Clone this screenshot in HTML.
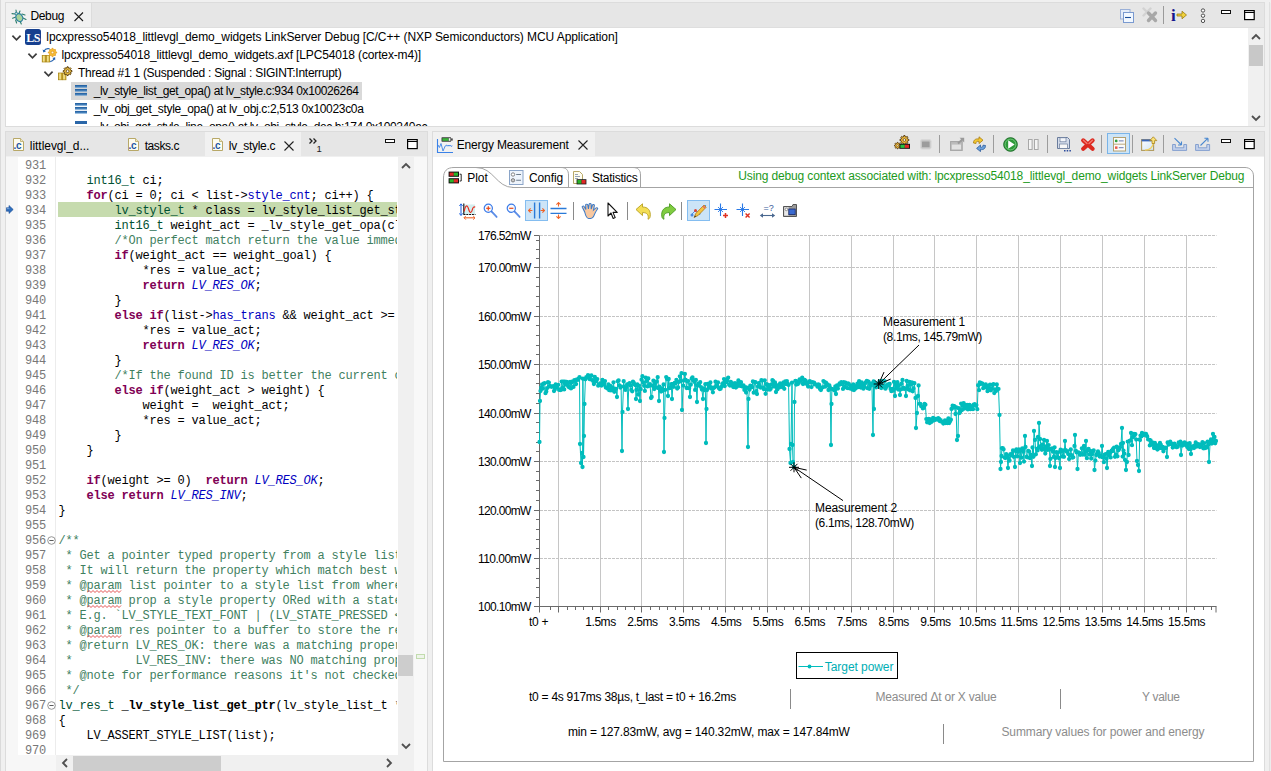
<!DOCTYPE html>
<html lang="en"><head><meta charset="utf-8"><title>Debug - Energy Measurement</title>
<style>
html,body{margin:0;padding:0}
body{width:1271px;height:771px;overflow:hidden;position:relative;background:#f0f0f0;font-family:"Liberation Sans",sans-serif;font-size:12px}
.b{position:absolute;display:block}
.t{position:absolute;white-space:pre;line-height:16px;height:16px}
.ui{font-family:"Liberation Sans",sans-serif;font-size:12px}
.ax{font-family:"Liberation Sans",sans-serif;font-size:12px}
.code{position:absolute;white-space:pre;font-family:"Liberation Mono",monospace;font-size:12px;letter-spacing:-0.2px;line-height:15px;height:15px;color:#000}
.kw{color:#7f0055;font-weight:bold}
.ty{color:#005032}
.fld{color:#0000c0}
.en{color:#0000c0;font-style:italic}
.cm{color:#3f7f5f}
.fn{font-weight:bold}
.ln{color:#787878}
.sq{text-decoration:underline wavy #e03030 1px;text-underline-offset:2px}

</style></head>
<body>
<div class="b" style="left:0px;top:0px;width:1px;height:771px;background:#dadada;"></div>
<div class="b" style="left:1269px;top:2px;width:1px;height:769px;background:#e0e0e0;"></div>
<div class="b" style="left:1270px;top:3px;width:1px;height:768px;background:#ececec;"></div>
<div class="b" style="left:5px;top:2px;width:1260px;height:125px;background:#ffffff;border:1px solid #dcdcdc;box-sizing:border-box;"></div>
<div class="b" style="left:6px;top:3px;width:1258px;height:25px;background:#e6e6e6;"></div>
<div class="b" style="left:6px;top:3px;width:85px;height:25px;background:#f1f1f1;"></div>
<div class="b" style="left:91px;top:3px;width:1px;height:25px;background:#dcdcdc;"></div>
<div class="b" style="left:6px;top:27px;width:1258px;height:1px;background:#dedede;"></div>
<span id="t1" class="t ui" style="left:30.5px;top:7.5px;color:#000;letter-spacing:-0.375px;">Debug</span>
<svg class="b" style="left:74px;top:12px" width="10" height="10" viewBox="0 0 10 10"><path d="M0.5 0.5L9 9M9 0.5L0.5 9" stroke="#1a1a1a" stroke-width="1.1" fill="none"/></svg>
<svg class="b" style="left:11px;top:34px" width="11" height="8" viewBox="0 0 11 8"><path d="M1.4 1.6L5.5 5.8L9.6 1.6" stroke="#3c3c3c" stroke-width="1.7" fill="none"/></svg>
<svg class="b" style="left:27.2px;top:52px" width="11" height="8" viewBox="0 0 11 8"><path d="M1.4 1.6L5.5 5.8L9.6 1.6" stroke="#3c3c3c" stroke-width="1.7" fill="none"/></svg>
<svg class="b" style="left:43.3px;top:70px" width="11" height="8" viewBox="0 0 11 8"><path d="M1.4 1.6L5.5 5.8L9.6 1.6" stroke="#3c3c3c" stroke-width="1.7" fill="none"/></svg>
<span id="t2" class="t ui" style="left:46.3px;top:28.5px;color:#000;letter-spacing:-0.079px;">lpcxpresso54018_littlevgl_demo_widgets LinkServer Debug [C/C++ (NXP Semiconductors) MCU Application]</span>
<span id="t3" class="t ui" style="left:61.4px;top:46.5px;color:#000;letter-spacing:-0.142px;">lpcxpresso54018_littlevgl_demo_widgets.axf [LPC54018 (cortex-m4)]</span>
<span id="t4" class="t ui" style="left:78.0px;top:64.5px;color:#000;letter-spacing:-0.263px;">Thread #1 1 (Suspended : Signal : SIGINT:Interrupt)</span>
<div class="b" style="left:71px;top:82px;width:291px;height:18px;background:#d9d9d9;"></div>
<span id="t5" class="t ui" style="left:93.7px;top:82.5px;color:#000;letter-spacing:-0.378px;">_lv_style_list_get_opa() at lv_style.c:934 0x10026264</span>
<span id="t6" class="t ui" style="left:93.7px;top:100.5px;color:#000;letter-spacing:-0.328px;">_lv_obj_get_style_opa() at lv_obj.c:2,513 0x10023c0a</span>
<div class="b" style="left:70px;top:118px;width:400px;height:8.4px;overflow:hidden">
<span id="t7" class="t ui" style="left:23.7px;top:1.3px;color:#000;letter-spacing:-0.415px;">_lv_obj_get_style_line_opa() at lv_obj_style_dec.h:174 0x100240ac</span>
<div class="b" style="left:5px;top:3px;width:12px;height:2.7px;background:#2a66a8;"></div>
</div>
<svg class="b" style="left:75px;top:85px" width="12" height="11" viewBox="0 0 12 11"><defs><linearGradient id="fg90" x1="0" y1="0" x2="0" y2="1"><stop offset="0" stop-color="#1c5a9c"/><stop offset="1" stop-color="#5c96cc"/></linearGradient></defs><rect x="0" y="0" width="12" height="2.7" fill="url(#fg90)"/><rect x="0" y="3.95" width="12" height="2.7" fill="url(#fg90)"/><rect x="0" y="7.9" width="12" height="2.7" fill="url(#fg90)"/></svg>
<svg class="b" style="left:75px;top:103px" width="12" height="11" viewBox="0 0 12 11"><defs><linearGradient id="fg108" x1="0" y1="0" x2="0" y2="1"><stop offset="0" stop-color="#1c5a9c"/><stop offset="1" stop-color="#5c96cc"/></linearGradient></defs><rect x="0" y="0" width="12" height="2.7" fill="url(#fg108)"/><rect x="0" y="3.95" width="12" height="2.7" fill="url(#fg108)"/><rect x="0" y="7.9" width="12" height="2.7" fill="url(#fg108)"/></svg>
<div class="b" style="left:1248px;top:28px;width:16px;height:98px;background:#f0f0f0;"></div>
<div class="b" style="left:1249px;top:45px;width:14px;height:21px;background:#c8c8c8;"></div>
<svg class="b" style="left:1251px;top:33px" width="10" height="8" viewBox="0 0 10 8"><path d="M1 6L5 2L9 6" stroke="#505050" stroke-width="1.8" fill="none"/></svg>
<svg class="b" style="left:1251px;top:113.8px" width="10" height="8" viewBox="0 0 10 8"><path d="M1 2L5 6L9 2" stroke="#505050" stroke-width="1.8" fill="none"/></svg>
<div class="b" style="left:5px;top:131px;width:423px;height:640px;background:#ffffff;border:1px solid #dcdcdc;border-bottom:none;box-sizing:border-box;"></div>
<div class="b" style="left:6px;top:132px;width:421px;height:24px;background:#e6e6e6;"></div>
<div class="b" style="left:6px;top:156px;width:421px;height:1px;background:#f0f0f0;"></div>
<div class="b" style="left:205px;top:132px;width:96px;height:25px;background:#f1f1f1;"></div>
<span id="t8" class="t ui" style="left:29.8px;top:137.5px;color:#000;letter-spacing:-0.038px;">littlevgl_d...</span>
<span id="t9" class="t ui" style="left:144.7px;top:137.5px;color:#000;letter-spacing:-0.435px;">tasks.c</span>
<span id="t10" class="t ui" style="left:228.8px;top:137.5px;color:#000;letter-spacing:-0.296px;">lv_style.c</span>
<svg class="b" style="left:284px;top:141px" width="10" height="10" viewBox="0 0 10 10"><path d="M0.5 0.5L9.5 9.5M9.5 0.5L0.5 9.5" stroke="#222" stroke-width="1.1" fill="none"/></svg>
<svg class="b" style="left:308px;top:137px" width="14" height="16" viewBox="0 0 14 16"><path d="M1.5 1.5L4 4L1.5 6.5M5.5 1.5L8 4L5.5 6.5" stroke="#222" stroke-width="1.3" fill="none"/><text x="8.5" y="14.5" font-size="9.5" font-family="Liberation Sans, sans-serif" fill="#222">1</text></svg>
<svg class="b" style="left:385px;top:139px" width="10" height="4" viewBox="0 0 10 4"><rect x="0.5" y="0.5" width="9" height="3" fill="#fff" stroke="#111" stroke-width="1"/></svg><svg class="b" style="left:407px;top:139px" width="11" height="11" viewBox="0 0 11 11"><rect x="0.6" y="0.6" width="9.6" height="9" fill="#fff" stroke="#000" stroke-width="1.2"/><path d="M0.5 2.5H10.2" stroke="#000" stroke-width="1"/></svg>
<svg class="b" style="left:1221px;top:10px" width="10" height="4" viewBox="0 0 10 4"><rect x="0.5" y="0.5" width="9" height="3" fill="#fff" stroke="#111" stroke-width="1"/></svg><svg class="b" style="left:1243.5px;top:10px" width="11" height="11" viewBox="0 0 11 11"><rect x="0.6" y="0.6" width="9.6" height="9" fill="#fff" stroke="#000" stroke-width="1.2"/><path d="M0.5 2.5H10.2" stroke="#000" stroke-width="1"/></svg>
<div class="b" style="left:6px;top:157px;width:12px;height:614px;background:#f7f7f7;"></div>
<div class="b" style="left:55px;top:157px;width:1px;height:598px;background:#ececec;"></div>
<div class="b" style="left:398px;top:157px;width:16px;height:598px;background:#f0f0f0;"></div>
<div class="b" style="left:398px;top:655px;width:15px;height:21px;background:#cdcdcd;"></div>
<svg class="b" style="left:400.5px;top:162px" width="10" height="8" viewBox="0 0 10 8"><path d="M1 6L5 2L9 6" stroke="#505050" stroke-width="1.8" fill="none"/></svg>
<svg class="b" style="left:400.5px;top:742px" width="10" height="8" viewBox="0 0 10 8"><path d="M1 2L5 6L9 2" stroke="#505050" stroke-width="1.8" fill="none"/></svg>
<div class="b" style="left:414px;top:157px;width:13px;height:614px;background:#f8f8f8;"></div>
<div class="b" style="left:416px;top:654px;width:9px;height:5px;border:1px solid #c2dcae;box-sizing:border-box;background:#eef4ea"></div>
<div class="b" style="left:56px;top:755px;width:358px;height:16px;background:#f0f0f0;"></div>
<div class="b" style="left:73px;top:756px;width:148px;height:15px;background:#cdcdcd;"></div>
<svg class="b" style="left:60.5px;top:758px" width="8" height="10" viewBox="0 0 8 10"><path d="M6 1L2 5L6 9" stroke="#505050" stroke-width="1.8" fill="none"/></svg>
<svg class="b" style="left:384.5px;top:758px" width="8" height="10" viewBox="0 0 8 10"><path d="M2 1L6 5L2 9" stroke="#505050" stroke-width="1.8" fill="none"/></svg>
<div class="b" style="left:18px;top:755px;width:38px;height:16px;background:#f7f7f7;"></div>
<div class="b" style="left:432px;top:131px;width:833px;height:640px;background:#ffffff;border:1px solid #dcdcdc;border-bottom:none;box-sizing:border-box;"></div>
<div class="b" style="left:433px;top:132px;width:831px;height:24px;background:#e6e6e6;"></div>
<div class="b" style="left:433px;top:156px;width:831px;height:1px;background:#f0f0f0;"></div>
<div class="b" style="left:433px;top:132px;width:162px;height:25px;background:#f1f1f1;"></div>
<span id="t11" class="t ui" style="left:456.7px;top:136.5px;color:#000;letter-spacing:-0.152px;">Energy Measurement</span>
<svg class="b" style="left:578px;top:140px" width="10" height="10" viewBox="0 0 10 10"><path d="M0.5 0.5L9.5 9.5M9.5 0.5L0.5 9.5" stroke="#222" stroke-width="1.1" fill="none"/></svg>
<svg class="b" style="left:1221px;top:139px" width="10" height="4" viewBox="0 0 10 4"><rect x="0.5" y="0.5" width="9" height="3" fill="#fff" stroke="#111" stroke-width="1"/></svg><svg class="b" style="left:1243.5px;top:139px" width="11" height="11" viewBox="0 0 11 11"><rect x="0.6" y="0.6" width="9.6" height="9" fill="#fff" stroke="#000" stroke-width="1.2"/><path d="M0.5 2.5H10.2" stroke="#000" stroke-width="1"/></svg>
<svg class="b" style="left:11px;top:9px" width="16" height="16" viewBox="0 0 16 16">
<g stroke="#2e7d6b" stroke-width="1.1" fill="none" stroke-linecap="round">
<path d="M5 1L5.4 4M9 2L8 4.2M1 4.6L4 5M1.6 9.3L4.2 8.2M4.6 11L5.6 14M9 12L10.3 15M11 5L14 6M12 9L15 10.5"/></g>
<ellipse cx="8.3" cy="8.6" rx="3.3" ry="4.1" transform="rotate(-30 8.3 8.6)" fill="#a9d39a" stroke="#2a7fa0" stroke-width="1.2"/>
<circle cx="5.3" cy="4.6" r="1.3" fill="#cfe6d0" stroke="#2a7fa0" stroke-width="1"/>
</svg>
<svg class="b" style="left:25px;top:29px" width="16" height="16" viewBox="0 0 16 16"><rect x="0" y="0" width="16" height="16" rx="2.5" fill="#17408f"/><text x="8" y="12.6" text-anchor="middle" font-family="Liberation Serif, serif" font-weight="bold" font-size="12" fill="#fff" letter-spacing="-0.5">LS</text></svg>
<svg class="b" style="left:41px;top:47px" width="17" height="17" viewBox="0 0 17 17"><defs><linearGradient id="gb" x1="0" y1="0" x2="1" y2="0"><stop offset="0" stop-color="#c09a18"/><stop offset="0.45" stop-color="#fbeea0"/><stop offset="1" stop-color="#c8a020"/></linearGradient></defs>
<rect x="1.2" y="8.4" width="3.5" height="6.6" fill="url(#gb)" stroke="#a88410" stroke-width="0.7"/>
<rect x="5.2" y="8.4" width="3.5" height="6.6" fill="url(#gb)" stroke="#a88410" stroke-width="0.7"/>
<polygon points="15.66,4.96 15.66,6.04 14.50,6.31 14.19,7.05 14.83,8.06 14.06,8.83 13.05,8.19 12.31,8.50 12.04,9.66 10.96,9.66 10.69,8.50 9.95,8.19 8.94,8.83 8.17,8.06 8.81,7.05 8.50,6.31 7.34,6.04 7.34,4.96 8.50,4.69 8.81,3.95 8.17,2.94 8.94,2.17 9.95,2.81 10.69,2.50 10.96,1.34 12.04,1.34 12.31,2.50 13.05,2.81 14.06,2.17 14.83,2.94 14.19,3.95 14.50,4.69" fill="#f8bc34" stroke="#e09a18" stroke-width="0.7" stroke-linejoin="round"/>
<circle cx="11.5" cy="5.5" r="1.3" fill="#fff4d8" stroke="#d08a10" stroke-width="0.6"/>
<path d="M2.8 4.2C4 2 6.2 1.2 8.6 1.8" stroke="#1f5fae" stroke-width="1.1" fill="none"/><path d="M1.6 2.6L2.4 5.6L5 4.2Z" fill="#1f5fae"/>
<path d="M9.2 14.6C11 14.4 12.4 13.4 13.2 11.8" stroke="#1f5fae" stroke-width="1.1" fill="none"/><path d="M11.4 11L14.2 10.2L14.2 13.2Z" fill="#1f5fae"/>
</svg>
<svg class="b" style="left:58px;top:65px" width="17" height="17" viewBox="0 0 17 17"><defs><linearGradient id="gb2" x1="0" y1="0" x2="1" y2="0"><stop offset="0" stop-color="#c09a18"/><stop offset="0.45" stop-color="#fbeea0"/><stop offset="1" stop-color="#c8a020"/></linearGradient></defs>
<rect x="0.4" y="8" width="3.6" height="6.8" fill="url(#gb2)" stroke="#a88410" stroke-width="0.7"/>
<rect x="4.4" y="8" width="3.6" height="6.8" fill="url(#gb2)" stroke="#a88410" stroke-width="0.7"/>
<polygon points="13.96,5.63 13.96,6.77 12.74,7.05 12.42,7.83 13.09,8.88 12.28,9.69 11.23,9.02 10.45,9.34 10.17,10.56 9.03,10.56 8.75,9.34 7.97,9.02 6.92,9.69 6.11,8.88 6.78,7.83 6.46,7.05 5.24,6.77 5.24,5.63 6.46,5.35 6.78,4.57 6.11,3.52 6.92,2.71 7.97,3.38 8.75,3.06 9.03,1.84 10.17,1.84 10.45,3.06 11.23,3.38 12.28,2.71 13.09,3.52 12.42,4.57 12.74,5.35" fill="#ecc040" stroke="#5a3e0c" stroke-width="1" stroke-linejoin="round"/>
<circle cx="9.6" cy="6.2" r="1.4" fill="#fffaf0" stroke="#5a3e0c" stroke-width="0.8"/>
</svg>
<svg class="b" style="left:1120px;top:9px" width="14" height="14" viewBox="0 0 14 14">
<rect x="0.5" y="0.5" width="9.5" height="9.5" fill="#e4ecf8" stroke="#9ab0d8"/>
<rect x="3.5" y="3.5" width="10" height="10" fill="#f2f8ff" stroke="#7a9ad0"/>
<path d="M5 8.5H11" stroke="#1c4f9c" stroke-width="1.1"/></svg>
<svg class="b" style="left:1142px;top:7px" width="16" height="16" viewBox="0 0 16 16">
<path d="M1.5 1.5L8.5 8.5M8.5 1.5L1.5 8.5" stroke="#d2d2d2" stroke-width="2.4" stroke-linecap="round"/>
<path d="M6.5 6L13.5 13.5M13.5 6L6.5 13.5" stroke="#a8a8a8" stroke-width="3.4" stroke-linecap="round"/></svg>
<div class="b" style="left:1163px;top:6px;width:1px;height:18px;background:#9a9a9a;"></div>
<svg class="b" style="left:1171px;top:8px" width="17" height="14" viewBox="0 0 17 14">
<text x="0" y="12.5" font-family="Liberation Serif, serif" font-weight="bold" font-size="17" fill="#14148c">i</text>
<path d="M6 6H11V3.2L15.5 7L11 10.8V8H6Z" fill="#f0d23c" stroke="#9a7a10" stroke-width="0.8"/></svg>
<svg class="b" style="left:1200px;top:7.7px" width="6" height="16" viewBox="0 0 6 16"><circle cx="3" cy="2.5" r="1.7" fill="#fff" stroke="#404040" stroke-width="0.9"/><circle cx="3" cy="7.7" r="1.7" fill="#fff" stroke="#404040" stroke-width="0.9"/><circle cx="3" cy="12.9" r="1.7" fill="#fff" stroke="#404040" stroke-width="0.9"/></svg>
<svg class="b" style="left:13px;top:138px" width="11" height="13" viewBox="0 0 11 13"><path d="M0.5 0.5H7.5L10.5 3.5V12.5H0.5Z" fill="#fdfcf0" stroke="#b8a868"/>
<path d="M7.5 0.5V3.5H10.5" fill="#efe7c0" stroke="#b8a868" stroke-width="0.8"/>
<text x="0.6" y="11" font-family="Liberation Sans, sans-serif" font-weight="bold" font-size="10" fill="#2456a4" letter-spacing="-0.4">.c</text></svg>
<svg class="b" style="left:128px;top:138px" width="11" height="13" viewBox="0 0 11 13"><path d="M0.5 0.5H7.5L10.5 3.5V12.5H0.5Z" fill="#fdfcf0" stroke="#b8a868"/>
<path d="M7.5 0.5V3.5H10.5" fill="#efe7c0" stroke="#b8a868" stroke-width="0.8"/>
<text x="0.6" y="11" font-family="Liberation Sans, sans-serif" font-weight="bold" font-size="10" fill="#2456a4" letter-spacing="-0.4">.c</text></svg>
<svg class="b" style="left:212px;top:138px" width="11" height="13" viewBox="0 0 11 13"><path d="M0.5 0.5H7.5L10.5 3.5V12.5H0.5Z" fill="#fdfcf0" stroke="#b8a868"/>
<path d="M7.5 0.5V3.5H10.5" fill="#efe7c0" stroke="#b8a868" stroke-width="0.8"/>
<text x="0.6" y="11" font-family="Liberation Sans, sans-serif" font-weight="bold" font-size="10" fill="#2456a4" letter-spacing="-0.4">.c</text></svg>
<svg class="b" style="left:436px;top:136px" width="18" height="18" viewBox="0 0 18 18">
<rect x="5.5" y="1.3" width="9.6" height="4.4" rx="0.6" fill="#3c3c3c"/><rect x="6.4" y="2.2" width="6.2" height="2.6" fill="#3cb83c"/><rect x="12.8" y="2.2" width="1.6" height="2.6" fill="#f4f4f4"/><rect x="15.1" y="2.4" width="1.6" height="2.2" fill="#3c3c3c"/>
<path d="M1.5 3V16.5H17" stroke="#3a82e8" stroke-width="1.1" fill="none"/>
<path d="M2 9L3.4 11.5L5 7.5L7 15L9.2 10L10.4 9L11.2 10.2L12.2 9L13 10.2L14 9L15 10.4L16.4 9.8" stroke="#3a82e8" stroke-width="0.9" fill="none"/></svg>
<svg class="b" style="left:894px;top:135px" width="17" height="17" viewBox="0 0 17 17"><polygon points="14.86,4.42 14.86,5.58 13.62,5.86 13.29,6.66 13.97,7.74 13.14,8.57 12.06,7.89 11.26,8.22 10.98,9.46 9.82,9.46 9.54,8.22 8.74,7.89 7.66,8.57 6.83,7.74 7.51,6.66 7.18,5.86 5.94,5.58 5.94,4.42 7.18,4.14 7.51,3.34 6.83,2.26 7.66,1.43 8.74,2.11 9.54,1.78 9.82,0.54 10.98,0.54 11.26,1.78 12.06,2.11 13.14,1.43 13.97,2.26 13.29,3.34 13.62,4.14" fill="#f2bc3c" stroke="#4a3008" stroke-width="0.9" stroke-linejoin="round"/><circle cx="10.4" cy="5" r="1.4" fill="#fff6dc" stroke="#4a3008" stroke-width="0.7"/><polygon points="6.77,10.19 6.77,11.01 5.89,11.21 5.65,11.78 6.14,12.55 5.55,13.14 4.78,12.65 4.21,12.89 4.01,13.77 3.19,13.77 2.99,12.89 2.42,12.65 1.65,13.14 1.06,12.55 1.55,11.78 1.31,11.21 0.43,11.01 0.43,10.19 1.31,9.99 1.55,9.42 1.06,8.65 1.65,8.06 2.42,8.55 2.99,8.31 3.19,7.43 4.01,7.43 4.21,8.31 4.78,8.55 5.55,8.06 6.14,8.65 5.65,9.42 5.89,9.99" fill="#f2bc3c" stroke="#4a3008" stroke-width="0.8" stroke-linejoin="round"/><circle cx="3.6" cy="10.6" r="0.9" fill="#fff6dc" stroke="#4a3008" stroke-width="0.5"/><rect x="5.5" y="8.8" width="10.5" height="5" fill="#111"/><rect x="6.4" y="9.7" width="4.4" height="3.2" fill="#28c040"/><rect x="10.8" y="9.7" width="4.3" height="3.2" fill="#e02828"/></svg>
<svg class="b" style="left:920px;top:139px" width="12" height="11" viewBox="0 0 12 11"><rect x="0.5" y="0.5" width="10.6" height="9.6" rx="1.8" fill="#c8c8c8" stroke="#d8d8d8" stroke-width="1"/><rect x="2" y="2.4" width="7.6" height="5.8" rx="0.5" fill="#9c9c9c"/></svg>
<div class="b" style="left:939px;top:135px;width:1px;height:18px;background:#9c9c9c;"></div>
<svg class="b" style="left:950px;top:137px" width="15" height="14" viewBox="0 0 15 14"><rect x="0.6" y="4.6" width="11.6" height="8.8" fill="#bcbcbc" stroke="#a6a6a6" stroke-width="1.1"/><rect x="1.8" y="7.6" width="9.2" height="4.8" fill="#e2e2e2"/><path d="M8 6.5L12.5 2.2" stroke="#9a9a9a" stroke-width="2" fill="none"/><path d="M9.6 0.8H14.2V5.4Z" fill="#9a9a9a"/></svg>
<svg class="b" style="left:972px;top:136px" width="15" height="16" viewBox="0 0 15 16">
<path d="M1.5 7C1.5 3.5 4 2.5 7 3V0.8L11 4.2L7 7.6V5.4C5 5 4 5.6 4 7.5Z" fill="#f4c830" stroke="#a87c10" stroke-width="0.8"/>
<path d="M13.5 9.5C13.5 13 11 14 8.5 13.5V15.6L4.6 12.4L8.5 9V11.2C10.2 11.5 11 10.8 11 9.2Z" fill="#6aa0dc" stroke="#2a5a9c" stroke-width="0.8"/></svg>
<div class="b" style="left:993px;top:135px;width:1px;height:18px;background:#9c9c9c;"></div>
<svg class="b" style="left:1003px;top:137px" width="15" height="15" viewBox="0 0 15 15"><circle cx="7.5" cy="7.5" r="6.8" fill="#2e9a3a" stroke="#1d6e28" stroke-width="1"/><circle cx="7.5" cy="7.5" r="5.4" fill="none" stroke="#7fd088" stroke-width="0.8"/><path d="M5.2 3.2L11.6 7.5L5.2 11.8Z" fill="#fff"/></svg>
<svg class="b" style="left:1028px;top:139px" width="11" height="11" viewBox="0 0 11 11"><rect x="0.5" y="0.5" width="3.6" height="10" fill="#f4f4f4" stroke="#a8a8a8"/><rect x="6.5" y="0.5" width="3.6" height="10" fill="#f4f4f4" stroke="#a8a8a8"/></svg>
<div class="b" style="left:1047px;top:135px;width:1px;height:18px;background:#9c9c9c;"></div>
<svg class="b" style="left:1057px;top:137px" width="15" height="15" viewBox="0 0 15 15"><path d="M0.5 0.5H10.5L12.5 2.5V11.5H0.5Z" fill="#d4dcea" stroke="#6a7c9c"/>
<rect x="3" y="0.8" width="6" height="4" fill="#f4f6fa" stroke="#6a7c9c" stroke-width="0.7"/><rect x="2.5" y="7" width="8" height="4.4" fill="#f8f8f8" stroke="#6a7c9c" stroke-width="0.7"/>
<rect x="7" y="13" width="1.5" height="1.5" fill="#2a4a9c"/><rect x="9.7" y="13" width="1.5" height="1.5" fill="#2a4a9c"/><rect x="12.4" y="13" width="1.5" height="1.5" fill="#2a4a9c"/></svg>
<svg class="b" style="left:1080px;top:137px" width="16" height="15" viewBox="0 0 16 15"><path d="M3.2 3.4L12.6 11.8M12.6 3.4L3.2 11.8" stroke="#dc2a20" stroke-width="4.2" stroke-linecap="round"/><path d="M3.4 3.2L7 6.4M12.4 3.2L9 6.4" stroke="#f47a70" stroke-width="1.4" stroke-linecap="round"/></svg>
<div class="b" style="left:1101px;top:135px;width:1px;height:18px;background:#9c9c9c;"></div>
<div class="b" style="left:1107px;top:133px;width:23px;height:21px;background:#cce4f7;border:1px solid #7ab4e8;box-sizing:border-box;"></div>
<svg class="b" style="left:1113px;top:137px" width="13" height="15" viewBox="0 0 13 15"><rect x="0.5" y="0.5" width="12" height="13.5" fill="#fafafa" stroke="#b4a070"/><path d="M0.5 7.2H12.5" stroke="#b4a070" stroke-width="0.9"/>
<circle cx="3.2" cy="3.9" r="1.4" fill="#30a040"/><rect x="2" y="9.4" width="2.5" height="2.5" fill="#e85a4a"/>
<path d="M5.8 3.9H10.6M5.8 10.7H10.6" stroke="#6a7ab0" stroke-width="1"/></svg>
<div class="b" style="left:1132px;top:135px;width:1px;height:18px;background:#9c9c9c;"></div>
<svg class="b" style="left:1141px;top:136px" width="17" height="16" viewBox="0 0 17 16"><defs><linearGradient id="wg" x1="0" y1="0" x2="1" y2="1"><stop offset="0" stop-color="#ffffff"/><stop offset="1" stop-color="#cfe4f6"/></linearGradient></defs>
<rect x="0.6" y="3.6" width="12" height="10.8" fill="url(#wg)" stroke="#b09a5c" stroke-width="1.1"/><rect x="0.6" y="3.4" width="10" height="2" fill="#3a66b8"/>
<path d="M4 14.2C9 14.2 12.2 11 12.2 6" stroke="#f0d060" stroke-width="1.2" fill="none"/>
<path d="M12.3 0.8L15.8 4.6H13.6V7.5H11V4.6H8.8Z" fill="#fbe27a" stroke="#a8841c" stroke-width="0.8"/></svg>
<div class="b" style="left:1163px;top:135px;width:1px;height:18px;background:#9c9c9c;"></div>
<svg class="b" style="left:1172px;top:137px" width="16" height="15" viewBox="0 0 16 15"><path d="M0.6 7.5V13.4H14.6V7.5H11.8V10.8H3.4V7.5Z" fill="#c4d2ec" stroke="#7a98cc" stroke-width="0.9"/><path d="M2.5 1.2L9.5 8M9.5 8V4.6M9.5 8H6" stroke="#4a88d0" stroke-width="1.1" fill="none"/></svg>
<svg class="b" style="left:1195px;top:137px" width="17" height="15" viewBox="0 0 17 15"><path d="M0.6 7.5V13.4H14.6V7.5H11.8V10.8H3.4V7.5Z" fill="#c4d2ec" stroke="#7a98cc" stroke-width="0.9"/><path d="M5.5 8.5L13 1.2M13 1.2V4.8M13 1.2H9.4" stroke="#4a88d0" stroke-width="1.1" fill="none"/></svg>
<svg class="b" style="left:6px;top:205px" width="8" height="9" viewBox="0 0 8 9"><path d="M0.3 2.8H3V0.5L7.2 4.5L3 8.5V6.2H0.3Z" fill="#2e6ebc" stroke="#1a4a94" stroke-width="0.6"/><path d="M0.8 3.6H3.4" stroke="#8ab4e4" stroke-width="0.8"/></svg>
<svg class="b" style="left:46.5px;top:535.5px" width="9" height="9" viewBox="0 0 9 9"><circle cx="4.5" cy="4.5" r="3.8" fill="#fff" stroke="#8a8a8a" stroke-width="0.9"/><path d="M2.4 4.5H6.6" stroke="#5a5a5a" stroke-width="1"/></svg>
<svg class="b" style="left:46.5px;top:700.5px" width="9" height="9" viewBox="0 0 9 9"><circle cx="4.5" cy="4.5" r="3.8" fill="#fff" stroke="#8a8a8a" stroke-width="0.9"/><path d="M2.4 4.5H6.6" stroke="#5a5a5a" stroke-width="1"/></svg>
<div class="b" style="left:18px;top:157px;width:379px;height:598px;overflow:hidden">
<div class="b" style="left:40px;top:45px;width:339px;height:15px;background:#c6dbae;"></div>
<span class="code ln" style="left:7px;top:2px">931</span>
<span class="code ln" style="left:7px;top:17px">932</span>
<span class="code" style="left:40.5px;top:17px">    <span class="ty">int16_t</span> ci;</span>
<span class="code ln" style="left:7px;top:32px">933</span>
<span class="code" style="left:40.5px;top:32px">    <span class="kw">for</span>(ci = 0; ci &lt; list-&gt;<span class="fld">style_cnt</span>; ci++) {</span>
<span class="code ln" style="left:7px;top:47px">934</span>
<span class="code" style="left:40.5px;top:47px">        <span class="ty">lv_style_t</span> * class = lv_style_list_get_style(list, ci);</span>
<span class="code ln" style="left:7px;top:62px">935</span>
<span class="code" style="left:40.5px;top:62px">        <span class="ty">int16_t</span> weight_act = _lv_style_get_opa(class, prop, &amp;value_act);</span>
<span class="code ln" style="left:7px;top:77px">936</span>
<span class="code" style="left:40.5px;top:77px">        <span class="cm">/*On perfect match return the value immediately*/</span></span>
<span class="code ln" style="left:7px;top:92px">937</span>
<span class="code" style="left:40.5px;top:92px">        <span class="kw">if</span>(weight_act == weight_goal) {</span>
<span class="code ln" style="left:7px;top:107px">938</span>
<span class="code" style="left:40.5px;top:107px">            *res = value_act;</span>
<span class="code ln" style="left:7px;top:122px">939</span>
<span class="code" style="left:40.5px;top:122px">            <span class="kw">return</span> <span class="en">LV_RES_OK</span>;</span>
<span class="code ln" style="left:7px;top:137px">940</span>
<span class="code" style="left:40.5px;top:137px">        }</span>
<span class="code ln" style="left:7px;top:152px">941</span>
<span class="code" style="left:40.5px;top:152px">        <span class="kw">else</span> <span class="kw">if</span>(list-&gt;<span class="fld">has_trans</span> &amp;&amp; weight_act &gt;= 0 &amp;&amp; weight_act &gt; weight) {</span>
<span class="code ln" style="left:7px;top:167px">942</span>
<span class="code" style="left:40.5px;top:167px">            *res = value_act;</span>
<span class="code ln" style="left:7px;top:182px">943</span>
<span class="code" style="left:40.5px;top:182px">            <span class="kw">return</span> <span class="en">LV_RES_OK</span>;</span>
<span class="code ln" style="left:7px;top:197px">944</span>
<span class="code" style="left:40.5px;top:197px">        }</span>
<span class="code ln" style="left:7px;top:212px">945</span>
<span class="code" style="left:40.5px;top:212px">        <span class="cm">/*If the found ID is better the current candidate then use it*/</span></span>
<span class="code ln" style="left:7px;top:227px">946</span>
<span class="code" style="left:40.5px;top:227px">        <span class="kw">else</span> <span class="kw">if</span>(weight_act &gt; weight) {</span>
<span class="code ln" style="left:7px;top:242px">947</span>
<span class="code" style="left:40.5px;top:242px">            weight =  weight_act;</span>
<span class="code ln" style="left:7px;top:257px">948</span>
<span class="code" style="left:40.5px;top:257px">            *res = value_act;</span>
<span class="code ln" style="left:7px;top:272px">949</span>
<span class="code" style="left:40.5px;top:272px">        }</span>
<span class="code ln" style="left:7px;top:287px">950</span>
<span class="code" style="left:40.5px;top:287px">    }</span>
<span class="code ln" style="left:7px;top:302px">951</span>
<span class="code ln" style="left:7px;top:317px">952</span>
<span class="code" style="left:40.5px;top:317px">    <span class="kw">if</span>(weight &gt;= 0)  <span class="kw">return</span> <span class="en">LV_RES_OK</span>;</span>
<span class="code ln" style="left:7px;top:332px">953</span>
<span class="code" style="left:40.5px;top:332px">    <span class="kw">else</span> <span class="kw">return</span> <span class="en">LV_RES_INV</span>;</span>
<span class="code ln" style="left:7px;top:347px">954</span>
<span class="code" style="left:40.5px;top:347px">}</span>
<span class="code ln" style="left:7px;top:362px">955</span>
<span class="code ln" style="left:7px;top:377px">956</span>
<span class="code" style="left:40.5px;top:377px"><span class="cm">/**</span></span>
<span class="code ln" style="left:7px;top:392px">957</span>
<span class="code" style="left:40.5px;top:392px"><span class="cm"> * Get a pointer typed property from a style list.</span></span>
<span class="code ln" style="left:7px;top:407px">958</span>
<span class="code" style="left:40.5px;top:407px"><span class="cm"> * It will return the property which match best with given state.</span></span>
<span class="code ln" style="left:7px;top:422px">959</span>
<span class="code" style="left:40.5px;top:422px"><span class="cm"> * @param list pointer to a style list from where the property should be get</span></span>
<span class="code ln" style="left:7px;top:437px">960</span>
<span class="code" style="left:40.5px;top:437px"><span class="cm"> * @param prop a style property ORed with a state.</span></span>
<span class="code ln" style="left:7px;top:452px">961</span>
<span class="code" style="left:40.5px;top:452px"><span class="cm"> * E.g. `LV_STYLE_TEXT_FONT | (LV_STATE_PRESSED &lt;&lt; LV_STYLE_STATE_POS)`</span></span>
<span class="code ln" style="left:7px;top:467px">962</span>
<span class="code" style="left:40.5px;top:467px"><span class="cm"> * @param res pointer to a buffer to store the result</span></span>
<span class="code ln" style="left:7px;top:482px">963</span>
<span class="code" style="left:40.5px;top:482px"><span class="cm"> * @return LV_RES_OK: there was a matching property in the list</span></span>
<span class="code ln" style="left:7px;top:497px">964</span>
<span class="code" style="left:40.5px;top:497px"><span class="cm"> *         LV_RES_INV: there was NO matching property in the list</span></span>
<span class="code ln" style="left:7px;top:512px">965</span>
<span class="code" style="left:40.5px;top:512px"><span class="cm"> * @note for performance reasons it&#x27;s not checked if the property really has pointer type</span></span>
<span class="code ln" style="left:7px;top:527px">966</span>
<span class="code" style="left:40.5px;top:527px"><span class="cm"> */</span></span>
<span class="code ln" style="left:7px;top:542px">967</span>
<span class="code" style="left:40.5px;top:542px"><span class="ty">lv_res_t</span> <span class="fn">_lv_style_list_get_ptr</span>(lv_style_list_t * list, lv_style_property_t prop, void ** res)</span>
<span class="code ln" style="left:7px;top:557px">968</span>
<span class="code" style="left:40.5px;top:557px">{</span>
<span class="code ln" style="left:7px;top:572px">969</span>
<span class="code" style="left:40.5px;top:572px">    LV_ASSERT_STYLE_LIST(list);</span>
<span class="code ln" style="left:7px;top:587px">970</span>
<svg class="b" style="left:68.5px;top:433px" width="35" height="3" viewBox="0 0 35 3"><path d="M0 2.5L2 0.5L4 2.5L6 0.5L8 2.5L10 0.5L12 2.5L14 0.5L16 2.5L18 0.5L20 2.5L22 0.5L24 2.5L26 0.5L28 2.5L30 0.5L32 2.5L34 0.5" stroke="#e04040" stroke-width="0.9" fill="none"/></svg>
<svg class="b" style="left:68.5px;top:448px" width="35" height="3" viewBox="0 0 35 3"><path d="M0 2.5L2 0.5L4 2.5L6 0.5L8 2.5L10 0.5L12 2.5L14 0.5L16 2.5L18 0.5L20 2.5L22 0.5L24 2.5L26 0.5L28 2.5L30 0.5L32 2.5L34 0.5" stroke="#e04040" stroke-width="0.9" fill="none"/></svg>
<svg class="b" style="left:68.5px;top:478px" width="35" height="3" viewBox="0 0 35 3"><path d="M0 2.5L2 0.5L4 2.5L6 0.5L8 2.5L10 0.5L12 2.5L14 0.5L16 2.5L18 0.5L20 2.5L22 0.5L24 2.5L26 0.5L28 2.5L30 0.5L32 2.5L34 0.5" stroke="#e04040" stroke-width="0.9" fill="none"/></svg>
</div>
<svg class="b" style="left:442px;top:166px" width="813" height="597" viewBox="0 0 813 597">
<path d="M1.5 595.5V12C1.5 5 5 1.5 12 1.5H803C808 1.5 811.5 5 811.5 10V595.5Z" fill="#ffffff" stroke="#a4a4a4" stroke-width="1"/>
<path d="M70 21.5H811.5" stroke="#a4a4a4" stroke-width="1" fill="none"/>
<path d="M34 1.5C52 1.5 54 21.5 71.5 21.5" fill="none" stroke="#a4a4a4" stroke-width="1"/>
<path d="M119 1.5C124 1.5 126.5 4 126.5 9V21.5" fill="none" stroke="#a4a4a4" stroke-width="1"/>
<path d="M191 1.5C196 1.5 198.5 4 198.5 9V21.5" fill="none" stroke="#a4a4a4" stroke-width="1"/>
</svg>
<svg class="b" style="left:448px;top:171px" width="15" height="14" viewBox="0 0 15 14"><rect x="0.6" y="0.6" width="10.4" height="5.2" fill="#111"/><rect x="1.6" y="1.6" width="4.2" height="3.2" fill="#e02828"/><rect x="5.8" y="1.6" width="4.2" height="3.2" fill="#28b428"/><rect x="0.6" y="7.2" width="10.4" height="5.2" fill="#111"/><rect x="1.6" y="8.2" width="4.2" height="3.2" fill="#28b428"/><rect x="5.8" y="8.2" width="4.2" height="3.2" fill="#e02828"/><path d="M11.6 3.2H13.2V10H11.6" stroke="#111" stroke-width="0.9" fill="none"/></svg>
<span id="t12" class="t ui" style="left:467.3px;top:170.0px;color:#000;letter-spacing:-0.047px;">Plot</span>
<svg class="b" style="left:509px;top:170px" width="15" height="15" viewBox="0 0 15 15"><rect x="0.5" y="0.5" width="13.5" height="14" fill="#eef4fc" stroke="#8aa4c8"/><circle cx="4" cy="4.5" r="1.7" fill="#fff" stroke="#6a6a6a" stroke-width="0.8"/><circle cx="4" cy="10.3" r="1.7" fill="#c8c8c8" stroke="#6a6a6a" stroke-width="0.8"/><path d="M7.2 4.5H12M7.2 10.3H12" stroke="#6a7a8a" stroke-width="1.1"/></svg>
<span id="t13" class="t ui" style="left:529.0px;top:170.0px;color:#000;letter-spacing:-0.115px;">Config</span>
<svg class="b" style="left:573px;top:171px" width="14" height="14" viewBox="0 0 14 14"><path d="M0.5 0.5H6.5L9.5 3.5V12.5H0.5Z" fill="#fffdf0" stroke="#b8a868"/><path d="M2 3.5H5M2 5.5H7M2 7.5H5" stroke="#7a8aa8" stroke-width="0.8"/><rect x="3.6" y="8.2" width="9.8" height="5.2" fill="#1a1a1a"/><rect x="4.4" y="9" width="4.2" height="3.6" fill="#28b428"/><rect x="8.6" y="9" width="4" height="3.6" fill="#e02828"/></svg>
<span id="t14" class="t ui" style="left:592.0px;top:170.0px;color:#000;letter-spacing:-0.252px;">Statistics</span>
<span id="t15" class="t ui" style="left:738.3px;top:168.0px;color:#1c9a1c;letter-spacing:-0.141px;">Using debug context associated with: lpcxpresso54018_littlevgl_demo_widgets LinkServer Debug</span>
<div class="b" style="left:525px;top:200px;width:23px;height:21px;background:#cce4f7;border:1px solid #84bdf0;box-sizing:border-box;"></div>
<div class="b" style="left:687px;top:200px;width:23px;height:21px;background:#cce4f7;border:1px solid #84bdf0;box-sizing:border-box;"></div>
<div class="b" style="left:573px;top:202px;width:1px;height:18px;background:#8a8a8a;"></div>
<div class="b" style="left:627px;top:202px;width:1px;height:18px;background:#8a8a8a;"></div>
<div class="b" style="left:681px;top:202px;width:1px;height:18px;background:#8a8a8a;"></div>
<svg class="b" style="left:459px;top:203px" width="17" height="17" viewBox="0 0 17 17"><rect x="5" y="1.5" width="11" height="9.5" fill="#d4f0f0"/>
<path d="M2 1V12" stroke="#2a6ae0" stroke-width="1.1"/><path d="M0.4 3L2 0.8L3.6 3M0.4 10.4L2 12.6L3.6 10.4" stroke="#2a6ae0" stroke-width="1" fill="none"/>
<path d="M4.8 0.5V11.5" stroke="#111" stroke-width="1.1" fill="none"/><path d="M4.5 11.5H16.5" stroke="#111" stroke-width="1.2" stroke-dasharray="2 0.8" fill="none"/>
<path d="M5.2 8.5C6.5 1.5 8.2 1.5 9.6 6C10.8 10.5 12.4 10.5 13.4 6.5C14 4.2 15 3.4 16.2 4.2" stroke="#e82818" stroke-width="1.1" fill="none"/>
<path d="M5 14.8H16" stroke="#f06428" stroke-width="1.1"/><path d="M6.8 13L5 14.8L6.8 16.6M14.2 13L16 14.8L14.2 16.6" stroke="#f06428" stroke-width="1" fill="none"/></svg>
<svg class="b" style="left:483px;top:203px" width="16" height="16" viewBox="0 0 16 16"><circle cx="5.3" cy="5.3" r="4.1" fill="#f6faff" stroke="#3a7ae8" stroke-width="1.2"/><path d="M8.4 8.4L13.6 13.8" stroke="#4a80e4" stroke-width="1.8" stroke-linecap="round"/><path d="M9 9.6L13 13.8" stroke="#a8c4f4" stroke-width="0.6"/><path d="M3.2 5.3H7.4" stroke="#e84818" stroke-width="1.2"/><path d="M5.3 3.2V7.4" stroke="#e84818" stroke-width="1.2"/></svg>
<svg class="b" style="left:506px;top:203px" width="16" height="16" viewBox="0 0 16 16"><circle cx="5.3" cy="5.3" r="4.1" fill="#f6faff" stroke="#3a7ae8" stroke-width="1.2"/><path d="M8.4 8.4L13.6 13.8" stroke="#4a80e4" stroke-width="1.8" stroke-linecap="round"/><path d="M9 9.6L13 13.8" stroke="#a8c4f4" stroke-width="0.6"/><path d="M3.2 5.3H7.4" stroke="#e84818" stroke-width="1.2"/></svg>
<svg class="b" style="left:528px;top:202px" width="17" height="17" viewBox="0 0 17 17"><path d="M6.6 0.5V16.5M11.6 0.5V16.5" stroke="#2a7ad8" stroke-width="1.4"/><path d="M0.5 8.5H4.4M12.6 8.5H16.5" stroke="#f06428" stroke-width="1.1"/><path d="M2.6 6.4L0.6 8.5L2.6 10.6M14.4 6.4L16.4 8.5L14.4 10.6" stroke="#f06428" stroke-width="1.1" fill="none"/></svg>
<svg class="b" style="left:550px;top:202px" width="17" height="17" viewBox="0 0 17 17"><path d="M0.5 6.5H16.5M0.5 11.4H16.5" stroke="#2a7ad8" stroke-width="1.4"/><path d="M8.5 0.5V4.4M8.5 12.6V16.5" stroke="#f06428" stroke-width="1.1"/><path d="M6.4 2.6L8.5 0.6L10.6 2.6M6.4 14.4L8.5 16.4L10.6 14.4" stroke="#f06428" stroke-width="1.1" fill="none"/></svg>
<svg class="b" style="left:581px;top:203px" width="18" height="16" viewBox="0 0 18 16"><path transform="scale(1.06 0.9)" d="M3.5 10C2.5 7.5 1.8 6 1.2 4.6C0.8 3.4 2.4 2.8 3 4L4.6 7.2L4.4 2.2C4.4 0.9 6.2 0.9 6.4 2.2L7 6.6L7.6 1.4C7.8 0.2 9.6 0.3 9.6 1.6L9.6 6.8L10.8 2.4C11.2 1.2 12.8 1.6 12.6 2.9L11.8 8L14 5.6C14.9 4.7 16.2 5.6 15.5 6.8C14.2 9 13.4 10.5 12.6 13C12 15.2 11.5 17 9 17.2H7.2C5.2 17 4.4 14.5 3.5 10Z" fill="#f8c8a0" stroke="#3a7ac8" stroke-width="1"/></svg>
<svg class="b" style="left:607px;top:202px" width="12" height="18" viewBox="0 0 12 18"><path d="M1 1V14L4 11L6.2 16.5L8.2 15.6L6 10.4H10.2Z" fill="#fff" stroke="#111" stroke-width="1.1" stroke-linejoin="round"/></svg>
<svg class="b" style="left:635px;top:203px" width="17" height="17" viewBox="0 0 17 17"><path d="M1 6.5L7.5 0.8V4C12.5 4 16 7 15.2 13.5C15 15 14 16 13 16.2C14 12 12 9.4 7.5 9.6V12.6Z" fill="#f4de54" stroke="#b8a020" stroke-width="0.9" stroke-linejoin="round"/></svg>
<svg class="b" style="left:659.5px;top:203px" width="17" height="17" viewBox="0 0 17 17"><path d="M16 6.5L9.5 0.8V4C4.5 4 1 7 1.8 13.5C2 15 3 16 4 16.2C3 12 5 9.4 9.5 9.6V12.6Z" fill="#80cc40" stroke="#4a9a20" stroke-width="0.9" stroke-linejoin="round"/></svg>
<svg class="b" style="left:690px;top:202px" width="18" height="18" viewBox="0 0 18 18"><path d="M1 13L5.5 8.5L9 11L16 3" stroke="#4a8ae0" stroke-width="1" fill="none"/>
<circle cx="2" cy="13" r="1.5" fill="#4a8ae0"/><circle cx="5.5" cy="8.5" r="1.5" fill="#e04030"/><circle cx="9" cy="11.5" r="1.5" fill="#4a8ae0"/>
<path d="M4 15.5L6 11.2L14 3L16.2 5.2L8.2 13.4Z" fill="#f4c440" stroke="#b07c18" stroke-width="0.8"/><path d="M13 4L15.2 6.2" stroke="#e06a6a" stroke-width="1.6"/><path d="M4 15.5L5 13.4L6.2 14.6Z" fill="#333"/></svg>
<svg class="b" style="left:713.5px;top:203px" width="16" height="16" viewBox="0 0 16 16"><path d="M6.5 0.5V13M0.5 6.5H13" stroke="#2a7ae8" stroke-width="1.1"/><path d="M4 4L9 9M9 4L4 9" stroke="#2a7ae8" stroke-width="0.9"/><path d="M11.5 10V15M9 12.5H14" stroke="#e03020" stroke-width="1.5"/></svg>
<svg class="b" style="left:735.7px;top:203px" width="16" height="16" viewBox="0 0 16 16"><path d="M6.5 0.5V13M0.5 6.5H13" stroke="#2a7ae8" stroke-width="1.1"/><path d="M4 4L9 9M9 4L4 9" stroke="#2a7ae8" stroke-width="0.9"/><path d="M9.6 10.6L13.6 14.6M13.6 10.6L9.6 14.6" stroke="#e03020" stroke-width="1.4"/></svg>
<svg class="b" style="left:758.5px;top:203px" width="17" height="16" viewBox="0 0 17 16"><text x="4.5" y="7.5" font-family="Liberation Sans, sans-serif" font-size="9" fill="#3a5a9a">=?</text><path d="M2 12.5H15" stroke="#4a6890" stroke-width="1.1"/><path d="M4 10.2L0.8 12.5L4 14.8ZM13 10.2L16.2 12.5L13 14.8Z" fill="#4a6890"/></svg>
<svg class="b" style="left:782px;top:203px" width="16" height="15" viewBox="0 0 16 15"><path d="M1.5 3.5H10L11 1.5H14.5V13.5H1.5Z" fill="#9a9a9a" stroke="#555" stroke-width="1"/><rect x="2.2" y="4.2" width="4.4" height="8.4" fill="#e8e8e8"/><circle cx="4.4" cy="6.4" r="1.3" fill="#fff" stroke="#6a6a6a" stroke-width="0.7"/><rect x="6.8" y="6" width="6.4" height="5.6" fill="#3a6ad0" stroke="#1a2a6a" stroke-width="0.8"/></svg>
<svg class="b" style="left:0px;top:0px" width="1271" height="771" viewBox="0 0 1271 771"><path d="M558.5 235.5V606.5" stroke="#c6c6c6" stroke-width="1"/><path d="M600.5 235.5V606.5" stroke="#c6c6c6" stroke-width="1"/><path d="M641.5 235.5V606.5" stroke="#c6c6c6" stroke-width="1"/><path d="M683.5 235.5V606.5" stroke="#c6c6c6" stroke-width="1"/><path d="M725.5 235.5V606.5" stroke="#c6c6c6" stroke-width="1"/><path d="M767.5 235.5V606.5" stroke="#c6c6c6" stroke-width="1"/><path d="M809.5 235.5V606.5" stroke="#c6c6c6" stroke-width="1"/><path d="M851.5 235.5V606.5" stroke="#c6c6c6" stroke-width="1"/><path d="M893.5 235.5V606.5" stroke="#c6c6c6" stroke-width="1"/><path d="M934.5 235.5V606.5" stroke="#c6c6c6" stroke-width="1"/><path d="M976.5 235.5V606.5" stroke="#c6c6c6" stroke-width="1"/><path d="M1018.5 235.5V606.5" stroke="#c6c6c6" stroke-width="1"/><path d="M1060.5 235.5V606.5" stroke="#c6c6c6" stroke-width="1"/><path d="M1102.5 235.5V606.5" stroke="#c6c6c6" stroke-width="1"/><path d="M1144.5 235.5V606.5" stroke="#c6c6c6" stroke-width="1"/><path d="M1186.5 235.5V606.5" stroke="#c6c6c6" stroke-width="1"/><path d="M540.0 235.5H1216.5" stroke="#c4c4c4" stroke-width="1" stroke-dasharray="3 1"/><path d="M540.0 267.5H1216.5" stroke="#c4c4c4" stroke-width="1" stroke-dasharray="3 1"/><path d="M540.0 316.5H1216.5" stroke="#c4c4c4" stroke-width="1" stroke-dasharray="3 1"/><path d="M540.0 364.5H1216.5" stroke="#c4c4c4" stroke-width="1" stroke-dasharray="3 1"/><path d="M540.0 413.5H1216.5" stroke="#c4c4c4" stroke-width="1" stroke-dasharray="3 1"/><path d="M540.0 461.5H1216.5" stroke="#c4c4c4" stroke-width="1" stroke-dasharray="3 1"/><path d="M540.0 510.5H1216.5" stroke="#c4c4c4" stroke-width="1" stroke-dasharray="3 1"/><path d="M540.0 558.5H1216.5" stroke="#c4c4c4" stroke-width="1" stroke-dasharray="3 1"/><path d="M539.5 235.5V607.0" stroke="#6a6a6a" stroke-width="1"/><path d="M539.0 606.5H1216.5" stroke="#6a6a6a" stroke-width="1"/><path d="M536.0 597.5H539.5" stroke="#6a6a6a" stroke-width="1"/><path d="M536.0 587.5H539.5" stroke="#6a6a6a" stroke-width="1"/><path d="M536.0 578.5H539.5" stroke="#6a6a6a" stroke-width="1"/><path d="M536.0 568.5H539.5" stroke="#6a6a6a" stroke-width="1"/><path d="M534.0 558.5H539.5" stroke="#6a6a6a" stroke-width="1"/><path d="M536.0 548.5H539.5" stroke="#6a6a6a" stroke-width="1"/><path d="M536.0 539.5H539.5" stroke="#6a6a6a" stroke-width="1"/><path d="M536.0 529.5H539.5" stroke="#6a6a6a" stroke-width="1"/><path d="M536.0 519.5H539.5" stroke="#6a6a6a" stroke-width="1"/><path d="M534.0 510.5H539.5" stroke="#6a6a6a" stroke-width="1"/><path d="M536.0 500.5H539.5" stroke="#6a6a6a" stroke-width="1"/><path d="M536.0 490.5H539.5" stroke="#6a6a6a" stroke-width="1"/><path d="M536.0 480.5H539.5" stroke="#6a6a6a" stroke-width="1"/><path d="M536.0 471.5H539.5" stroke="#6a6a6a" stroke-width="1"/><path d="M534.0 461.5H539.5" stroke="#6a6a6a" stroke-width="1"/><path d="M536.0 451.5H539.5" stroke="#6a6a6a" stroke-width="1"/><path d="M536.0 442.5H539.5" stroke="#6a6a6a" stroke-width="1"/><path d="M536.0 432.5H539.5" stroke="#6a6a6a" stroke-width="1"/><path d="M536.0 422.5H539.5" stroke="#6a6a6a" stroke-width="1"/><path d="M534.0 413.5H539.5" stroke="#6a6a6a" stroke-width="1"/><path d="M536.0 403.5H539.5" stroke="#6a6a6a" stroke-width="1"/><path d="M536.0 393.5H539.5" stroke="#6a6a6a" stroke-width="1"/><path d="M536.0 383.5H539.5" stroke="#6a6a6a" stroke-width="1"/><path d="M536.0 374.5H539.5" stroke="#6a6a6a" stroke-width="1"/><path d="M534.0 364.5H539.5" stroke="#6a6a6a" stroke-width="1"/><path d="M536.0 354.5H539.5" stroke="#6a6a6a" stroke-width="1"/><path d="M536.0 345.5H539.5" stroke="#6a6a6a" stroke-width="1"/><path d="M536.0 335.5H539.5" stroke="#6a6a6a" stroke-width="1"/><path d="M536.0 325.5H539.5" stroke="#6a6a6a" stroke-width="1"/><path d="M534.0 316.5H539.5" stroke="#6a6a6a" stroke-width="1"/><path d="M536.0 306.5H539.5" stroke="#6a6a6a" stroke-width="1"/><path d="M536.0 296.5H539.5" stroke="#6a6a6a" stroke-width="1"/><path d="M536.0 286.5H539.5" stroke="#6a6a6a" stroke-width="1"/><path d="M536.0 277.5H539.5" stroke="#6a6a6a" stroke-width="1"/><path d="M534.0 267.5H539.5" stroke="#6a6a6a" stroke-width="1"/><path d="M536.0 258.5H539.5" stroke="#6a6a6a" stroke-width="1"/><path d="M536.0 249.5H539.5" stroke="#6a6a6a" stroke-width="1"/><path d="M536.0 240.5H539.5" stroke="#6a6a6a" stroke-width="1"/><path d="M534.0 235.5H539.5" stroke="#6a6a6a" stroke-width="1"/><path d="M534.0 606.5H539.5" stroke="#6a6a6a" stroke-width="1"/><path d="M550.5 606.5V610.0" stroke="#6a6a6a" stroke-width="1"/><path d="M558.5 606.5V612.5" stroke="#6a6a6a" stroke-width="1"/><path d="M567.5 606.5V610.0" stroke="#6a6a6a" stroke-width="1"/><path d="M575.5 606.5V610.0" stroke="#6a6a6a" stroke-width="1"/><path d="M583.5 606.5V610.0" stroke="#6a6a6a" stroke-width="1"/><path d="M592.5 606.5V610.0" stroke="#6a6a6a" stroke-width="1"/><path d="M600.5 606.5V612.5" stroke="#6a6a6a" stroke-width="1"/><path d="M608.5 606.5V610.0" stroke="#6a6a6a" stroke-width="1"/><path d="M617.5 606.5V610.0" stroke="#6a6a6a" stroke-width="1"/><path d="M625.5 606.5V610.0" stroke="#6a6a6a" stroke-width="1"/><path d="M634.5 606.5V610.0" stroke="#6a6a6a" stroke-width="1"/><path d="M641.5 606.5V612.5" stroke="#6a6a6a" stroke-width="1"/><path d="M650.5 606.5V610.0" stroke="#6a6a6a" stroke-width="1"/><path d="M659.5 606.5V610.0" stroke="#6a6a6a" stroke-width="1"/><path d="M667.5 606.5V610.0" stroke="#6a6a6a" stroke-width="1"/><path d="M675.5 606.5V610.0" stroke="#6a6a6a" stroke-width="1"/><path d="M683.5 606.5V612.5" stroke="#6a6a6a" stroke-width="1"/><path d="M692.5 606.5V610.0" stroke="#6a6a6a" stroke-width="1"/><path d="M701.5 606.5V610.0" stroke="#6a6a6a" stroke-width="1"/><path d="M709.5 606.5V610.0" stroke="#6a6a6a" stroke-width="1"/><path d="M717.5 606.5V610.0" stroke="#6a6a6a" stroke-width="1"/><path d="M725.5 606.5V612.5" stroke="#6a6a6a" stroke-width="1"/><path d="M734.5 606.5V610.0" stroke="#6a6a6a" stroke-width="1"/><path d="M742.5 606.5V610.0" stroke="#6a6a6a" stroke-width="1"/><path d="M751.5 606.5V610.0" stroke="#6a6a6a" stroke-width="1"/><path d="M759.5 606.5V610.0" stroke="#6a6a6a" stroke-width="1"/><path d="M767.5 606.5V612.5" stroke="#6a6a6a" stroke-width="1"/><path d="M776.5 606.5V610.0" stroke="#6a6a6a" stroke-width="1"/><path d="M784.5 606.5V610.0" stroke="#6a6a6a" stroke-width="1"/><path d="M793.5 606.5V610.0" stroke="#6a6a6a" stroke-width="1"/><path d="M801.5 606.5V610.0" stroke="#6a6a6a" stroke-width="1"/><path d="M809.5 606.5V612.5" stroke="#6a6a6a" stroke-width="1"/><path d="M818.5 606.5V610.0" stroke="#6a6a6a" stroke-width="1"/><path d="M826.5 606.5V610.0" stroke="#6a6a6a" stroke-width="1"/><path d="M834.5 606.5V610.0" stroke="#6a6a6a" stroke-width="1"/><path d="M843.5 606.5V610.0" stroke="#6a6a6a" stroke-width="1"/><path d="M851.5 606.5V612.5" stroke="#6a6a6a" stroke-width="1"/><path d="M860.5 606.5V610.0" stroke="#6a6a6a" stroke-width="1"/><path d="M868.5 606.5V610.0" stroke="#6a6a6a" stroke-width="1"/><path d="M876.5 606.5V610.0" stroke="#6a6a6a" stroke-width="1"/><path d="M885.5 606.5V610.0" stroke="#6a6a6a" stroke-width="1"/><path d="M893.5 606.5V612.5" stroke="#6a6a6a" stroke-width="1"/><path d="M901.5 606.5V610.0" stroke="#6a6a6a" stroke-width="1"/><path d="M910.5 606.5V610.0" stroke="#6a6a6a" stroke-width="1"/><path d="M918.5 606.5V610.0" stroke="#6a6a6a" stroke-width="1"/><path d="M927.5 606.5V610.0" stroke="#6a6a6a" stroke-width="1"/><path d="M934.5 606.5V612.5" stroke="#6a6a6a" stroke-width="1"/><path d="M943.5 606.5V610.0" stroke="#6a6a6a" stroke-width="1"/><path d="M952.5 606.5V610.0" stroke="#6a6a6a" stroke-width="1"/><path d="M960.5 606.5V610.0" stroke="#6a6a6a" stroke-width="1"/><path d="M968.5 606.5V610.0" stroke="#6a6a6a" stroke-width="1"/><path d="M976.5 606.5V612.5" stroke="#6a6a6a" stroke-width="1"/><path d="M985.5 606.5V610.0" stroke="#6a6a6a" stroke-width="1"/><path d="M994.5 606.5V610.0" stroke="#6a6a6a" stroke-width="1"/><path d="M1002.5 606.5V610.0" stroke="#6a6a6a" stroke-width="1"/><path d="M1010.5 606.5V610.0" stroke="#6a6a6a" stroke-width="1"/><path d="M1018.5 606.5V612.5" stroke="#6a6a6a" stroke-width="1"/><path d="M1027.5 606.5V610.0" stroke="#6a6a6a" stroke-width="1"/><path d="M1035.5 606.5V610.0" stroke="#6a6a6a" stroke-width="1"/><path d="M1044.5 606.5V610.0" stroke="#6a6a6a" stroke-width="1"/><path d="M1052.5 606.5V610.0" stroke="#6a6a6a" stroke-width="1"/><path d="M1060.5 606.5V612.5" stroke="#6a6a6a" stroke-width="1"/><path d="M1069.5 606.5V610.0" stroke="#6a6a6a" stroke-width="1"/><path d="M1077.5 606.5V610.0" stroke="#6a6a6a" stroke-width="1"/><path d="M1086.5 606.5V610.0" stroke="#6a6a6a" stroke-width="1"/><path d="M1094.5 606.5V610.0" stroke="#6a6a6a" stroke-width="1"/><path d="M1102.5 606.5V612.5" stroke="#6a6a6a" stroke-width="1"/><path d="M1111.5 606.5V610.0" stroke="#6a6a6a" stroke-width="1"/><path d="M1119.5 606.5V610.0" stroke="#6a6a6a" stroke-width="1"/><path d="M1127.5 606.5V610.0" stroke="#6a6a6a" stroke-width="1"/><path d="M1136.5 606.5V610.0" stroke="#6a6a6a" stroke-width="1"/><path d="M1144.5 606.5V612.5" stroke="#6a6a6a" stroke-width="1"/><path d="M1153.5 606.5V610.0" stroke="#6a6a6a" stroke-width="1"/><path d="M1161.5 606.5V610.0" stroke="#6a6a6a" stroke-width="1"/><path d="M1169.5 606.5V610.0" stroke="#6a6a6a" stroke-width="1"/><path d="M1178.5 606.5V610.0" stroke="#6a6a6a" stroke-width="1"/><path d="M1186.5 606.5V612.5" stroke="#6a6a6a" stroke-width="1"/><path d="M1194.5 606.5V610.0" stroke="#6a6a6a" stroke-width="1"/><path d="M1203.5 606.5V610.0" stroke="#6a6a6a" stroke-width="1"/><path d="M1211.5 606.5V610.0" stroke="#6a6a6a" stroke-width="1"/><path d="M1216.0 606.5V612.5" stroke="#6a6a6a" stroke-width="1"/><path d="M539.5 606.5V612.5" stroke="#6a6a6a" stroke-width="1"/><polyline fill="none" stroke="#00bcbc" stroke-width="1" stroke-linejoin="round" points="539.5,442.0 540.0,401.0 540.5,391.0 541.2,387.5 542.1,384.3 542.9,388.5 543.8,383.3 544.6,383.2 545.5,393.2 546.3,391.5 547.2,388.1 548.0,382.2 548.9,382.6 549.7,386.3 550.6,386.1 551.4,386.8 552.3,386.6 553.1,386.1 554.0,391.1 554.8,389.5 555.7,384.4 556.5,387.3 557.4,385.1 558.2,384.8 559.1,389.9 559.9,389.5 560.8,390.0 561.6,381.6 562.5,387.9 563.3,381.6 564.2,389.4 565.0,381.7 565.9,384.7 566.7,382.0 567.6,384.3 568.4,386.7 569.3,387.4 570.1,381.8 571.0,388.4 571.8,382.3 572.7,381.3 573.5,386.9 574.4,380.1 575.2,380.7 576.1,384.1 576.9,379.5 577.8,379.9 578.6,378.7 579.5,377.1 580.0,444.0 581.0,463.0 582.0,453.0 582.5,467.0 582.9,378.7 583.5,457.0 584.0,436.0 584.5,404.0 585.4,379.3 586.3,377.2 587.1,377.2 588.0,375.2 588.8,375.8 589.7,379.2 590.5,375.9 591.4,375.4 592.2,380.1 593.1,381.0 593.9,384.0 594.8,376.8 595.6,381.5 596.5,380.6 597.3,379.1 598.2,385.7 599.0,384.1 599.9,383.9 600.7,383.1 601.6,385.6 602.4,380.0 603.3,384.4 604.1,383.2 605.0,381.1 605.8,387.5 606.7,387.8 607.5,388.6 608.4,384.5 609.2,390.2 610.1,385.6 610.9,390.4 611.8,388.2 612.6,387.7 613.5,382.3 614.3,391.8 615.2,388.8 616.0,388.8 617.0,397.0 617.7,381.2 618.6,380.4 619.4,385.3 620.3,387.6 621.1,386.5 622.0,451.0 622.5,412.0 623.7,381.2 624.5,387.1 625.4,389.9 626.2,387.3 627.1,384.5 628.0,409.0 628.8,384.0 629.6,383.2 630.5,385.5 631.3,389.9 632.2,391.3 633.0,381.6 633.9,383.0 634.7,384.5 635.6,385.3 636.0,399.0 636.4,389.8 637.3,384.5 638.1,394.7 639.0,385.6 640.0,401.0 640.7,389.2 641.5,379.7 642.4,376.2 643.2,382.5 644.1,385.8 644.9,390.9 645.8,377.7 646.6,380.9 647.5,386.4 648.3,378.4 649.2,385.8 650.0,384.2 651.0,398.0 651.7,396.9 652.6,385.8 653.4,380.7 654.3,389.1 655.1,383.0 656.0,387.4 656.8,381.5 657.7,377.2 658.5,388.2 659.0,401.0 659.4,386.6 660.2,390.0 661.1,391.5 661.9,388.4 662.8,390.5 663.6,384.5 664.0,452.0 664.5,418.0 665.3,389.8 666.2,377.1 667.0,379.0 668.0,396.0 668.7,379.0 669.6,388.2 670.4,387.6 671.3,384.1 672.0,399.0 673.0,383.9 673.8,386.8 674.7,383.0 675.5,383.2 676.4,379.9 677.2,388.5 678.1,387.5 678.9,381.9 679.8,376.3 680.6,381.2 681.5,373.2 682.0,410.0 683.2,385.6 684.0,380.4 684.9,373.9 685.7,379.8 686.6,388.0 687.4,381.4 688.3,381.1 689.1,388.2 690.0,397.0 690.8,384.7 691.7,378.4 692.5,377.3 693.4,380.3 694.2,381.8 695.1,389.9 695.9,379.9 697.0,402.0 697.6,385.3 698.5,383.7 699.3,385.7 700.2,382.2 701.0,387.1 701.9,389.5 703.0,399.0 703.6,388.4 704.4,390.1 705.3,384.2 706.0,443.0 706.5,409.0 707.0,390.0 707.8,383.8 708.7,387.5 709.5,385.4 710.4,382.5 711.2,388.6 712.1,387.6 712.9,392.3 713.8,388.1 714.6,387.3 715.5,381.7 716.3,385.9 717.2,385.9 718.0,382.4 718.9,388.2 719.7,389.1 720.6,388.8 721.4,386.8 722.3,383.8 723.1,383.1 724.0,379.1 724.8,386.1 725.7,382.3 726.5,381.6 727.4,379.1 728.2,377.6 729.1,384.8 729.9,385.6 730.8,381.8 731.6,382.9 732.5,385.8 733.3,387.0 734.2,386.1 735.0,383.1 735.9,387.5 736.7,386.7 737.6,383.5 738.4,380.5 739.3,385.7 740.1,385.9 741.0,382.2 741.8,386.3 742.7,386.4 743.5,385.3 744.4,389.9 745.2,387.1 746.1,392.6 746.9,387.7 748.0,447.0 748.5,399.0 749.5,389.7 750.3,385.7 751.2,386.4 752.0,387.2 752.9,381.4 753.7,392.7 754.6,382.1 755.4,382.2 756.3,391.1 757.0,394.0 758.0,386.4 758.8,383.2 759.7,386.0 760.5,387.5 761.4,380.2 762.2,380.4 763.1,387.7 763.9,389.2 764.8,380.3 765.6,393.8 766.5,384.2 767.3,389.7 768.2,385.0 769.0,387.1 769.9,389.7 770.7,388.7 771.6,384.3 772.4,380.2 773.3,381.0 774.1,386.5 775.0,382.4 776.0,392.0 776.7,385.1 777.5,389.3 778.4,386.2 779.2,387.6 780.1,383.4 780.9,386.6 781.8,385.7 782.6,387.3 783.5,382.4 784.3,388.8 785.2,381.5 786.0,384.1 786.9,381.1 787.7,383.6 788.6,384.9 789.5,449.0 790.5,463.0 791.0,444.0 792.0,382.7 792.5,445.0 793.0,462.0 794.0,467.0 794.5,402.0 795.4,380.8 796.2,384.5 797.1,381.6 797.9,384.1 798.8,383.0 799.6,379.5 800.5,380.8 801.3,379.4 802.2,377.7 803.0,384.0 803.9,383.6 804.7,379.9 805.6,380.7 806.4,383.8 807.3,383.0 808.1,386.6 809.0,382.2 809.8,381.1 810.7,382.2 811.5,387.1 812.4,382.1 813.2,382.3 814.1,382.6 814.9,384.4 815.8,384.4 816.6,384.7 817.5,386.7 818.3,384.5 819.2,384.9 820.0,389.1 820.9,390.0 821.7,388.0 822.6,387.3 823.4,381.1 824.3,381.8 825.1,386.7 826.0,382.7 826.8,385.6 827.7,384.5 828.5,390.0 829.4,385.5 830.2,387.8 831.0,445.0 831.5,404.0 831.9,388.9 832.8,389.3 833.6,389.1 834.5,390.4 835.3,386.3 836.0,394.0 837.0,385.4 837.9,388.6 838.7,385.1 839.6,383.5 840.4,384.4 841.3,382.1 842.1,382.6 843.0,388.9 843.8,382.1 844.7,387.0 845.5,382.6 846.4,383.5 847.2,388.1 848.1,383.5 848.9,384.0 849.8,388.4 850.6,386.4 851.5,385.7 852.3,389.5 853.2,384.4 854.0,390.0 854.9,387.1 855.7,388.5 856.6,386.0 857.4,383.7 858.3,387.1 859.1,381.2 860.0,384.4 860.8,387.5 861.7,382.5 862.5,383.9 863.4,388.7 864.2,386.6 865.1,383.3 865.9,382.2 866.8,380.9 867.6,388.2 868.5,381.6 869.3,388.8 870.2,384.8 871.0,385.7 871.9,383.3 873.0,435.0 873.6,381.4 874.0,409.0 874.4,382.4 875.3,385.0 876.1,387.4 877.0,384.2 877.8,384.3 878.7,383.5 879.5,381.5 880.4,384.7 881.2,388.0 882.1,380.9 882.9,387.3 883.8,386.1 884.6,381.1 885.5,388.7 886.3,387.1 887.2,384.9 888.0,384.3 888.9,385.3 889.7,384.0 890.6,389.0 891.4,391.2 892.3,388.8 893.1,390.5 894.0,381.9 895.0,396.0 895.7,385.1 896.5,388.2 897.4,382.2 898.2,389.5 899.1,385.1 900.0,395.0 900.8,389.4 901.6,383.7 902.5,380.0 903.3,387.9 904.2,388.9 905.0,388.4 906.0,396.0 906.7,381.0 907.6,385.8 908.4,389.4 909.3,382.0 910.1,390.4 911.0,384.4 911.8,382.3 912.7,391.3 913.5,388.5 914.4,383.2 915.5,398.0 916.0,428.0 917.0,413.0 918.0,396.0 918.6,385.5 919.5,403.8 920.3,403.8 921.2,406.3 922.0,406.4 922.9,408.4 923.7,407.9 924.6,403.8 925.4,404.7 926.3,419.1 927.1,422.3 928.0,420.9 928.8,418.8 929.7,423.0 930.5,419.5 931.4,421.9 932.2,421.1 933.1,417.9 933.9,420.4 934.8,420.0 935.6,418.8 936.5,419.3 937.3,419.7 938.2,418.1 939.0,418.7 939.9,421.2 940.7,420.2 941.6,421.7 942.4,422.1 943.3,423.5 944.1,422.7 945.0,420.4 945.8,423.0 946.7,420.9 947.5,423.0 948.4,418.3 949.2,423.0 950.1,421.3 950.9,419.7 951.5,409.0 952.6,405.7 953.5,407.5 954.3,406.2 955.5,414.0 956.0,407.1 957.0,440.0 958.0,436.0 958.6,408.2 959.5,413.0 960.3,411.4 961.1,403.6 962.0,410.1 962.8,404.8 963.7,403.2 964.5,408.5 965.4,405.3 966.2,405.9 967.1,404.9 967.9,409.4 968.8,406.1 969.6,404.9 970.5,409.2 971.3,408.8 972.2,406.2 973.0,409.2 973.9,404.3 974.7,404.2 975.6,405.6 976.4,405.1 977.3,409.2 978.1,385.2 979.0,390.2 979.8,382.4 980.7,384.0 981.5,383.2 982.4,383.6 983.2,388.2 984.1,387.3 984.9,386.8 985.8,384.4 986.6,387.6 987.5,391.2 988.3,385.9 989.2,389.0 990.0,384.7 990.9,390.3 991.7,388.9 992.6,384.9 993.4,384.2 994.3,393.1 995.1,389.3 996.0,391.0 996.8,384.5 997.7,388.6 998.5,388.9 999.5,415.0 1000.5,469.0 1001.0,462.0 1001.5,456.0 1001.9,448.2 1002.8,448.1 1003.6,449.3 1004.5,457.6 1005.3,458.1 1006.2,454.1 1007.0,455.7 1008.0,468.0 1008.7,458.2 1009.6,460.7 1010.4,454.2 1011.3,455.3 1012.1,453.3 1013.0,450.5 1013.8,456.8 1015.0,467.0 1015.5,450.9 1016.4,449.4 1017.2,456.4 1018.1,451.7 1018.9,449.4 1020.0,463.0 1020.6,449.8 1021.5,457.7 1022.3,448.3 1023.2,451.7 1024.0,461.6 1025.0,436.0 1025.5,447.0 1026.6,457.0 1027.4,457.3 1028.3,451.0 1029.1,451.4 1030.0,458.2 1030.8,454.7 1032.0,466.0 1032.5,447.5 1033.4,456.8 1034.0,431.0 1035.0,440.0 1035.9,454.3 1037.0,449.0 1037.6,450.4 1038.0,437.0 1038.5,448.0 1039.0,423.0 1040.0,439.0 1041.0,445.9 1041.9,449.8 1042.7,444.4 1043.6,449.2 1044.0,440.0 1044.4,449.4 1045.3,453.5 1046.1,446.5 1047.0,441.0 1047.8,449.9 1048.7,445.1 1049.5,449.0 1050.0,466.0 1050.4,458.9 1051.2,449.6 1052.1,448.3 1052.9,451.5 1053.8,456.9 1054.6,447.3 1055.0,467.0 1055.5,458.1 1056.3,452.1 1057.2,457.4 1058.0,452.4 1058.9,458.0 1060.0,468.0 1060.6,449.7 1061.4,451.3 1062.3,456.5 1063.1,450.3 1064.0,456.8 1065.0,441.0 1065.7,450.2 1066.5,451.6 1067.4,451.2 1068.2,454.1 1069.1,459.1 1069.9,455.1 1070.8,449.5 1071.6,455.2 1072.5,457.7 1073.3,457.3 1074.5,446.0 1075.0,435.0 1075.9,450.8 1076.7,452.4 1077.5,469.0 1078.4,452.4 1079.3,452.8 1080.1,454.8 1081.0,454.5 1081.8,448.3 1082.7,454.5 1083.5,448.4 1084.0,446.0 1084.4,454.7 1085.2,451.4 1086.0,441.0 1086.9,458.2 1087.8,450.1 1088.6,448.9 1089.5,454.4 1090.3,450.9 1091.2,458.5 1092.0,454.2 1092.9,451.8 1093.7,450.5 1094.5,470.0 1095.4,460.6 1096.3,455.0 1097.1,453.6 1098.0,451.4 1098.8,452.9 1099.7,456.5 1100.5,455.6 1101.4,456.8 1102.0,446.0 1103.1,457.4 1103.9,462.2 1104.8,454.6 1105.6,454.1 1106.5,458.5 1107.0,468.0 1108.2,451.9 1109.0,455.3 1109.9,453.3 1110.7,457.4 1111.6,450.7 1112.4,451.2 1113.0,449.0 1114.1,447.6 1115.0,456.8 1115.8,454.7 1116.7,446.6 1117.5,456.3 1118.4,450.2 1119.2,449.0 1120.1,447.3 1121.0,444.0 1122.0,428.0 1122.6,456.6 1123.0,443.0 1123.5,450.6 1124.3,453.7 1125.0,460.0 1126.0,470.0 1127.0,462.0 1127.7,441.6 1128.6,455.0 1129.4,441.0 1130.3,440.6 1131.0,433.0 1132.0,445.2 1133.0,437.0 1134.0,434.0 1134.5,435.1 1135.4,434.2 1136.2,439.6 1137.0,461.0 1138.0,465.0 1139.0,471.0 1139.6,439.4 1140.0,440.0 1140.5,435.6 1141.3,436.4 1142.0,433.0 1143.0,433.7 1143.9,435.0 1144.7,434.3 1145.5,433.8 1146.0,434.0 1146.4,434.8 1147.2,436.4 1148.1,439.4 1148.9,439.6 1149.8,445.4 1150.6,440.4 1151.5,443.9 1152.3,442.4 1153.2,445.0 1154.0,448.0 1154.9,443.0 1155.7,448.0 1156.6,445.2 1157.4,449.6 1158.3,446.3 1159.1,448.3 1160.0,442.9 1160.8,444.7 1161.7,448.2 1162.5,447.0 1163.4,451.3 1164.2,448.3 1165.1,447.6 1165.9,448.0 1167.0,457.0 1167.6,442.5 1168.5,444.7 1169.3,443.4 1170.2,441.6 1171.0,443.2 1171.9,444.3 1172.7,447.6 1173.6,446.3 1174.4,443.6 1175.3,445.1 1176.1,447.1 1177.0,447.2 1177.8,446.7 1178.7,442.4 1179.5,444.3 1180.4,441.7 1181.0,455.0 1182.1,445.7 1182.9,443.2 1183.8,444.1 1184.6,442.5 1185.5,445.0 1186.3,443.4 1187.2,447.1 1188.0,443.8 1188.9,449.0 1189.7,443.2 1190.6,449.3 1191.0,454.0 1191.4,446.5 1192.3,446.5 1193.1,446.2 1194.0,448.0 1194.8,445.3 1195.7,442.3 1196.5,446.6 1197.4,446.3 1198.2,444.1 1199.1,445.7 1199.9,447.1 1200.8,444.4 1201.6,445.5 1202.5,442.1 1203.3,448.3 1204.2,443.1 1205.0,448.2 1205.9,446.9 1206.7,447.5 1207.6,441.7 1208.4,444.4 1209.0,462.0 1210.1,442.9 1211.0,439.4 1211.8,443.6 1213.0,434.0 1213.5,441.7 1214.5,437.0 1215.2,443.3 1216.0,441.0"/><path fill="none" stroke="#00bcbc" stroke-width="4.3" stroke-linecap="round" d="M539.5 442.0h0M540.0 401.0h0M540.5 391.0h0M541.2 387.5h0M542.1 384.3h0M542.9 388.5h0M543.8 383.3h0M544.6 383.2h0M545.5 393.2h0M546.3 391.5h0M547.2 388.1h0M548.0 382.2h0M548.9 382.6h0M549.7 386.3h0M550.6 386.1h0M551.4 386.8h0M552.3 386.6h0M553.1 386.1h0M554.0 391.1h0M554.8 389.5h0M555.7 384.4h0M556.5 387.3h0M557.4 385.1h0M558.2 384.8h0M559.1 389.9h0M559.9 389.5h0M560.8 390.0h0M561.6 381.6h0M562.5 387.9h0M563.3 381.6h0M564.2 389.4h0M565.0 381.7h0M565.9 384.7h0M566.7 382.0h0M567.6 384.3h0M568.4 386.7h0M569.3 387.4h0M570.1 381.8h0M571.0 388.4h0M571.8 382.3h0M572.7 381.3h0M573.5 386.9h0M574.4 380.1h0M575.2 380.7h0M576.1 384.1h0M576.9 379.5h0M577.8 379.9h0M578.6 378.7h0M579.5 377.1h0M580.0 444.0h0M581.0 463.0h0M582.0 453.0h0M582.5 467.0h0M582.9 378.7h0M583.5 457.0h0M584.0 436.0h0M584.5 404.0h0M585.4 379.3h0M586.3 377.2h0M587.1 377.2h0M588.0 375.2h0M588.8 375.8h0M589.7 379.2h0M590.5 375.9h0M591.4 375.4h0M592.2 380.1h0M593.1 381.0h0M593.9 384.0h0M594.8 376.8h0M595.6 381.5h0M596.5 380.6h0M597.3 379.1h0M598.2 385.7h0M599.0 384.1h0M599.9 383.9h0M600.7 383.1h0M601.6 385.6h0M602.4 380.0h0M603.3 384.4h0M604.1 383.2h0M605.0 381.1h0M605.8 387.5h0M606.7 387.8h0M607.5 388.6h0M608.4 384.5h0M609.2 390.2h0M610.1 385.6h0M610.9 390.4h0M611.8 388.2h0M612.6 387.7h0M613.5 382.3h0M614.3 391.8h0M615.2 388.8h0M616.0 388.8h0M617.0 397.0h0M617.7 381.2h0M618.6 380.4h0M619.4 385.3h0M620.3 387.6h0M621.1 386.5h0M622.0 451.0h0M622.5 412.0h0M623.7 381.2h0M624.5 387.1h0M625.4 389.9h0M626.2 387.3h0M627.1 384.5h0M628.0 409.0h0M628.8 384.0h0M629.6 383.2h0M630.5 385.5h0M631.3 389.9h0M632.2 391.3h0M633.0 381.6h0M633.9 383.0h0M634.7 384.5h0M635.6 385.3h0M636.0 399.0h0M636.4 389.8h0M637.3 384.5h0M638.1 394.7h0M639.0 385.6h0M640.0 401.0h0M640.7 389.2h0M641.5 379.7h0M642.4 376.2h0M643.2 382.5h0M644.1 385.8h0M644.9 390.9h0M645.8 377.7h0M646.6 380.9h0M647.5 386.4h0M648.3 378.4h0M649.2 385.8h0M650.0 384.2h0M651.0 398.0h0M651.7 396.9h0M652.6 385.8h0M653.4 380.7h0M654.3 389.1h0M655.1 383.0h0M656.0 387.4h0M656.8 381.5h0M657.7 377.2h0M658.5 388.2h0M659.0 401.0h0M659.4 386.6h0M660.2 390.0h0M661.1 391.5h0M661.9 388.4h0M662.8 390.5h0M663.6 384.5h0M664.0 452.0h0M664.5 418.0h0M665.3 389.8h0M666.2 377.1h0M667.0 379.0h0M668.0 396.0h0M668.7 379.0h0M669.6 388.2h0M670.4 387.6h0M671.3 384.1h0M672.0 399.0h0M673.0 383.9h0M673.8 386.8h0M674.7 383.0h0M675.5 383.2h0M676.4 379.9h0M677.2 388.5h0M678.1 387.5h0M678.9 381.9h0M679.8 376.3h0M680.6 381.2h0M681.5 373.2h0M682.0 410.0h0M683.2 385.6h0M684.0 380.4h0M684.9 373.9h0M685.7 379.8h0M686.6 388.0h0M687.4 381.4h0M688.3 381.1h0M689.1 388.2h0M690.0 397.0h0M690.8 384.7h0M691.7 378.4h0M692.5 377.3h0M693.4 380.3h0M694.2 381.8h0M695.1 389.9h0M695.9 379.9h0M697.0 402.0h0M697.6 385.3h0M698.5 383.7h0M699.3 385.7h0M700.2 382.2h0M701.0 387.1h0M701.9 389.5h0M703.0 399.0h0M703.6 388.4h0M704.4 390.1h0M705.3 384.2h0M706.0 443.0h0M706.5 409.0h0M707.0 390.0h0M707.8 383.8h0M708.7 387.5h0M709.5 385.4h0M710.4 382.5h0M711.2 388.6h0M712.1 387.6h0M712.9 392.3h0M713.8 388.1h0M714.6 387.3h0M715.5 381.7h0M716.3 385.9h0M717.2 385.9h0M718.0 382.4h0M718.9 388.2h0M719.7 389.1h0M720.6 388.8h0M721.4 386.8h0M722.3 383.8h0M723.1 383.1h0M724.0 379.1h0M724.8 386.1h0M725.7 382.3h0M726.5 381.6h0M727.4 379.1h0M728.2 377.6h0M729.1 384.8h0M729.9 385.6h0M730.8 381.8h0M731.6 382.9h0M732.5 385.8h0M733.3 387.0h0M734.2 386.1h0M735.0 383.1h0M735.9 387.5h0M736.7 386.7h0M737.6 383.5h0M738.4 380.5h0M739.3 385.7h0M740.1 385.9h0M741.0 382.2h0M741.8 386.3h0M742.7 386.4h0M743.5 385.3h0M744.4 389.9h0M745.2 387.1h0M746.1 392.6h0M746.9 387.7h0M748.0 447.0h0M748.5 399.0h0M749.5 389.7h0M750.3 385.7h0M751.2 386.4h0M752.0 387.2h0M752.9 381.4h0M753.7 392.7h0M754.6 382.1h0M755.4 382.2h0M756.3 391.1h0M757.0 394.0h0M758.0 386.4h0M758.8 383.2h0M759.7 386.0h0M760.5 387.5h0M761.4 380.2h0M762.2 380.4h0M763.1 387.7h0M763.9 389.2h0M764.8 380.3h0M765.6 393.8h0M766.5 384.2h0M767.3 389.7h0M768.2 385.0h0M769.0 387.1h0M769.9 389.7h0M770.7 388.7h0M771.6 384.3h0M772.4 380.2h0M773.3 381.0h0M774.1 386.5h0M775.0 382.4h0M776.0 392.0h0M776.7 385.1h0M777.5 389.3h0M778.4 386.2h0M779.2 387.6h0M780.1 383.4h0M780.9 386.6h0M781.8 385.7h0M782.6 387.3h0M783.5 382.4h0M784.3 388.8h0M785.2 381.5h0M786.0 384.1h0M786.9 381.1h0M787.7 383.6h0M788.6 384.9h0M789.5 449.0h0M790.5 463.0h0M791.0 444.0h0M792.0 382.7h0M792.5 445.0h0M793.0 462.0h0M794.0 467.0h0M794.5 402.0h0M795.4 380.8h0M796.2 384.5h0M797.1 381.6h0M797.9 384.1h0M798.8 383.0h0M799.6 379.5h0M800.5 380.8h0M801.3 379.4h0M802.2 377.7h0M803.0 384.0h0M803.9 383.6h0M804.7 379.9h0M805.6 380.7h0M806.4 383.8h0M807.3 383.0h0M808.1 386.6h0M809.0 382.2h0M809.8 381.1h0M810.7 382.2h0M811.5 387.1h0M812.4 382.1h0M813.2 382.3h0M814.1 382.6h0M814.9 384.4h0M815.8 384.4h0M816.6 384.7h0M817.5 386.7h0M818.3 384.5h0M819.2 384.9h0M820.0 389.1h0M820.9 390.0h0M821.7 388.0h0M822.6 387.3h0M823.4 381.1h0M824.3 381.8h0M825.1 386.7h0M826.0 382.7h0M826.8 385.6h0M827.7 384.5h0M828.5 390.0h0M829.4 385.5h0M830.2 387.8h0M831.0 445.0h0M831.5 404.0h0M831.9 388.9h0M832.8 389.3h0M833.6 389.1h0M834.5 390.4h0M835.3 386.3h0M836.0 394.0h0M837.0 385.4h0M837.9 388.6h0M838.7 385.1h0M839.6 383.5h0M840.4 384.4h0M841.3 382.1h0M842.1 382.6h0M843.0 388.9h0M843.8 382.1h0M844.7 387.0h0M845.5 382.6h0M846.4 383.5h0M847.2 388.1h0M848.1 383.5h0M848.9 384.0h0M849.8 388.4h0M850.6 386.4h0M851.5 385.7h0M852.3 389.5h0M853.2 384.4h0M854.0 390.0h0M854.9 387.1h0M855.7 388.5h0M856.6 386.0h0M857.4 383.7h0M858.3 387.1h0M859.1 381.2h0M860.0 384.4h0M860.8 387.5h0M861.7 382.5h0M862.5 383.9h0M863.4 388.7h0M864.2 386.6h0M865.1 383.3h0M865.9 382.2h0M866.8 380.9h0M867.6 388.2h0M868.5 381.6h0M869.3 388.8h0M870.2 384.8h0M871.0 385.7h0M871.9 383.3h0M873.0 435.0h0M873.6 381.4h0M874.0 409.0h0M874.4 382.4h0M875.3 385.0h0M876.1 387.4h0M877.0 384.2h0M877.8 384.3h0M878.7 383.5h0M879.5 381.5h0M880.4 384.7h0M881.2 388.0h0M882.1 380.9h0M882.9 387.3h0M883.8 386.1h0M884.6 381.1h0M885.5 388.7h0M886.3 387.1h0M887.2 384.9h0M888.0 384.3h0M888.9 385.3h0M889.7 384.0h0M890.6 389.0h0M891.4 391.2h0M892.3 388.8h0M893.1 390.5h0M894.0 381.9h0M895.0 396.0h0M895.7 385.1h0M896.5 388.2h0M897.4 382.2h0M898.2 389.5h0M899.1 385.1h0M900.0 395.0h0M900.8 389.4h0M901.6 383.7h0M902.5 380.0h0M903.3 387.9h0M904.2 388.9h0M905.0 388.4h0M906.0 396.0h0M906.7 381.0h0M907.6 385.8h0M908.4 389.4h0M909.3 382.0h0M910.1 390.4h0M911.0 384.4h0M911.8 382.3h0M912.7 391.3h0M913.5 388.5h0M914.4 383.2h0M915.5 398.0h0M916.0 428.0h0M917.0 413.0h0M918.0 396.0h0M918.6 385.5h0M919.5 403.8h0M920.3 403.8h0M921.2 406.3h0M922.0 406.4h0M922.9 408.4h0M923.7 407.9h0M924.6 403.8h0M925.4 404.7h0M926.3 419.1h0M927.1 422.3h0M928.0 420.9h0M928.8 418.8h0M929.7 423.0h0M930.5 419.5h0M931.4 421.9h0M932.2 421.1h0M933.1 417.9h0M933.9 420.4h0M934.8 420.0h0M935.6 418.8h0M936.5 419.3h0M937.3 419.7h0M938.2 418.1h0M939.0 418.7h0M939.9 421.2h0M940.7 420.2h0M941.6 421.7h0M942.4 422.1h0M943.3 423.5h0M944.1 422.7h0M945.0 420.4h0M945.8 423.0h0M946.7 420.9h0M947.5 423.0h0M948.4 418.3h0M949.2 423.0h0M950.1 421.3h0M950.9 419.7h0M951.5 409.0h0M952.6 405.7h0M953.5 407.5h0M954.3 406.2h0M955.5 414.0h0M956.0 407.1h0M957.0 440.0h0M958.0 436.0h0M958.6 408.2h0M959.5 413.0h0M960.3 411.4h0M961.1 403.6h0M962.0 410.1h0M962.8 404.8h0M963.7 403.2h0M964.5 408.5h0M965.4 405.3h0M966.2 405.9h0M967.1 404.9h0M967.9 409.4h0M968.8 406.1h0M969.6 404.9h0M970.5 409.2h0M971.3 408.8h0M972.2 406.2h0M973.0 409.2h0M973.9 404.3h0M974.7 404.2h0M975.6 405.6h0M976.4 405.1h0M977.3 409.2h0M978.1 385.2h0M979.0 390.2h0M979.8 382.4h0M980.7 384.0h0M981.5 383.2h0M982.4 383.6h0M983.2 388.2h0M984.1 387.3h0M984.9 386.8h0M985.8 384.4h0M986.6 387.6h0M987.5 391.2h0M988.3 385.9h0M989.2 389.0h0M990.0 384.7h0M990.9 390.3h0M991.7 388.9h0M992.6 384.9h0M993.4 384.2h0M994.3 393.1h0M995.1 389.3h0M996.0 391.0h0M996.8 384.5h0M997.7 388.6h0M998.5 388.9h0M999.5 415.0h0M1000.5 469.0h0M1001.0 462.0h0M1001.5 456.0h0M1001.9 448.2h0M1002.8 448.1h0M1003.6 449.3h0M1004.5 457.6h0M1005.3 458.1h0M1006.2 454.1h0M1007.0 455.7h0M1008.0 468.0h0M1008.7 458.2h0M1009.6 460.7h0M1010.4 454.2h0M1011.3 455.3h0M1012.1 453.3h0M1013.0 450.5h0M1013.8 456.8h0M1015.0 467.0h0M1015.5 450.9h0M1016.4 449.4h0M1017.2 456.4h0M1018.1 451.7h0M1018.9 449.4h0M1020.0 463.0h0M1020.6 449.8h0M1021.5 457.7h0M1022.3 448.3h0M1023.2 451.7h0M1024.0 461.6h0M1025.0 436.0h0M1025.5 447.0h0M1026.6 457.0h0M1027.4 457.3h0M1028.3 451.0h0M1029.1 451.4h0M1030.0 458.2h0M1030.8 454.7h0M1032.0 466.0h0M1032.5 447.5h0M1033.4 456.8h0M1034.0 431.0h0M1035.0 440.0h0M1035.9 454.3h0M1037.0 449.0h0M1037.6 450.4h0M1038.0 437.0h0M1038.5 448.0h0M1039.0 423.0h0M1040.0 439.0h0M1041.0 445.9h0M1041.9 449.8h0M1042.7 444.4h0M1043.6 449.2h0M1044.0 440.0h0M1044.4 449.4h0M1045.3 453.5h0M1046.1 446.5h0M1047.0 441.0h0M1047.8 449.9h0M1048.7 445.1h0M1049.5 449.0h0M1050.0 466.0h0M1050.4 458.9h0M1051.2 449.6h0M1052.1 448.3h0M1052.9 451.5h0M1053.8 456.9h0M1054.6 447.3h0M1055.0 467.0h0M1055.5 458.1h0M1056.3 452.1h0M1057.2 457.4h0M1058.0 452.4h0M1058.9 458.0h0M1060.0 468.0h0M1060.6 449.7h0M1061.4 451.3h0M1062.3 456.5h0M1063.1 450.3h0M1064.0 456.8h0M1065.0 441.0h0M1065.7 450.2h0M1066.5 451.6h0M1067.4 451.2h0M1068.2 454.1h0M1069.1 459.1h0M1069.9 455.1h0M1070.8 449.5h0M1071.6 455.2h0M1072.5 457.7h0M1073.3 457.3h0M1074.5 446.0h0M1075.0 435.0h0M1075.9 450.8h0M1076.7 452.4h0M1077.5 469.0h0M1078.4 452.4h0M1079.3 452.8h0M1080.1 454.8h0M1081.0 454.5h0M1081.8 448.3h0M1082.7 454.5h0M1083.5 448.4h0M1084.0 446.0h0M1084.4 454.7h0M1085.2 451.4h0M1086.0 441.0h0M1086.9 458.2h0M1087.8 450.1h0M1088.6 448.9h0M1089.5 454.4h0M1090.3 450.9h0M1091.2 458.5h0M1092.0 454.2h0M1092.9 451.8h0M1093.7 450.5h0M1094.5 470.0h0M1095.4 460.6h0M1096.3 455.0h0M1097.1 453.6h0M1098.0 451.4h0M1098.8 452.9h0M1099.7 456.5h0M1100.5 455.6h0M1101.4 456.8h0M1102.0 446.0h0M1103.1 457.4h0M1103.9 462.2h0M1104.8 454.6h0M1105.6 454.1h0M1106.5 458.5h0M1107.0 468.0h0M1108.2 451.9h0M1109.0 455.3h0M1109.9 453.3h0M1110.7 457.4h0M1111.6 450.7h0M1112.4 451.2h0M1113.0 449.0h0M1114.1 447.6h0M1115.0 456.8h0M1115.8 454.7h0M1116.7 446.6h0M1117.5 456.3h0M1118.4 450.2h0M1119.2 449.0h0M1120.1 447.3h0M1121.0 444.0h0M1122.0 428.0h0M1122.6 456.6h0M1123.0 443.0h0M1123.5 450.6h0M1124.3 453.7h0M1125.0 460.0h0M1126.0 470.0h0M1127.0 462.0h0M1127.7 441.6h0M1128.6 455.0h0M1129.4 441.0h0M1130.3 440.6h0M1131.0 433.0h0M1132.0 445.2h0M1133.0 437.0h0M1134.0 434.0h0M1134.5 435.1h0M1135.4 434.2h0M1136.2 439.6h0M1137.0 461.0h0M1138.0 465.0h0M1139.0 471.0h0M1139.6 439.4h0M1140.0 440.0h0M1140.5 435.6h0M1141.3 436.4h0M1142.0 433.0h0M1143.0 433.7h0M1143.9 435.0h0M1144.7 434.3h0M1145.5 433.8h0M1146.0 434.0h0M1146.4 434.8h0M1147.2 436.4h0M1148.1 439.4h0M1148.9 439.6h0M1149.8 445.4h0M1150.6 440.4h0M1151.5 443.9h0M1152.3 442.4h0M1153.2 445.0h0M1154.0 448.0h0M1154.9 443.0h0M1155.7 448.0h0M1156.6 445.2h0M1157.4 449.6h0M1158.3 446.3h0M1159.1 448.3h0M1160.0 442.9h0M1160.8 444.7h0M1161.7 448.2h0M1162.5 447.0h0M1163.4 451.3h0M1164.2 448.3h0M1165.1 447.6h0M1165.9 448.0h0M1167.0 457.0h0M1167.6 442.5h0M1168.5 444.7h0M1169.3 443.4h0M1170.2 441.6h0M1171.0 443.2h0M1171.9 444.3h0M1172.7 447.6h0M1173.6 446.3h0M1174.4 443.6h0M1175.3 445.1h0M1176.1 447.1h0M1177.0 447.2h0M1177.8 446.7h0M1178.7 442.4h0M1179.5 444.3h0M1180.4 441.7h0M1181.0 455.0h0M1182.1 445.7h0M1182.9 443.2h0M1183.8 444.1h0M1184.6 442.5h0M1185.5 445.0h0M1186.3 443.4h0M1187.2 447.1h0M1188.0 443.8h0M1188.9 449.0h0M1189.7 443.2h0M1190.6 449.3h0M1191.0 454.0h0M1191.4 446.5h0M1192.3 446.5h0M1193.1 446.2h0M1194.0 448.0h0M1194.8 445.3h0M1195.7 442.3h0M1196.5 446.6h0M1197.4 446.3h0M1198.2 444.1h0M1199.1 445.7h0M1199.9 447.1h0M1200.8 444.4h0M1201.6 445.5h0M1202.5 442.1h0M1203.3 448.3h0M1204.2 443.1h0M1205.0 448.2h0M1205.9 446.9h0M1206.7 447.5h0M1207.6 441.7h0M1208.4 444.4h0M1209.0 462.0h0M1210.1 442.9h0M1211.0 439.4h0M1211.8 443.6h0M1213.0 434.0h0M1213.5 441.7h0M1214.5 437.0h0M1215.2 443.3h0M1216.0 441.0h0"/><path d="M878.7 379.0v10M873.7 384.0h10M875.2 380.5l7 7M882.2 380.5l-7 7" stroke="#000" stroke-width="1" fill="none"/><path d="M919.0 345.0L878.7 384.0" stroke="#000" stroke-width="1"/><path d="M878.7 384.0L890.7 379.1" stroke="#000" stroke-width="1"/><path d="M878.7 384.0L884.0 372.1" stroke="#000" stroke-width="1"/><path d="M794.0 462.3v10M789.0 467.3h10M790.5 463.8l7 7M797.5 463.8l-7 7" stroke="#000" stroke-width="1" fill="none"/><path d="M843.0 500.6L794.0 467.3" stroke="#000" stroke-width="1"/><path d="M794.0 467.3L801.3 478.1" stroke="#000" stroke-width="1"/><path d="M794.0 467.3L806.7 470.1" stroke="#000" stroke-width="1"/></svg>
<span id="t16" class="t ax" style="left:478.0px;top:227.5px;color:#000;letter-spacing:-0.654px;">176.52mW</span>
<span id="t17" class="t ax" style="left:478.0px;top:259.5px;color:#000;letter-spacing:-0.654px;">170.00mW</span>
<span id="t18" class="t ax" style="left:478.0px;top:308.5px;color:#000;letter-spacing:-0.654px;">160.00mW</span>
<span id="t19" class="t ax" style="left:478.0px;top:356.5px;color:#000;letter-spacing:-0.654px;">150.00mW</span>
<span id="t20" class="t ax" style="left:478.0px;top:405.5px;color:#000;letter-spacing:-0.654px;">140.00mW</span>
<span id="t21" class="t ax" style="left:478.0px;top:453.5px;color:#000;letter-spacing:-0.654px;">130.00mW</span>
<span id="t22" class="t ax" style="left:478.0px;top:502.5px;color:#000;letter-spacing:-0.654px;">120.00mW</span>
<span id="t23" class="t ax" style="left:478.0px;top:550.5px;color:#000;letter-spacing:-0.543px;">110.00mW</span>
<span id="t24" class="t ax" style="left:478.0px;top:598.5px;color:#000;letter-spacing:-0.654px;">100.10mW</span>
<span id="t25" class="t ax" style="left:529.0px;top:614.0px;color:#000;letter-spacing:-0.265px;">t0 +</span>
<span id="t26" class="t ax" style="left:585.3px;top:614.0px;color:#000;letter-spacing:-0.458px;">1.5ms</span>
<span id="t27" class="t ax" style="left:627.2px;top:614.0px;color:#000;letter-spacing:-0.458px;">2.5ms</span>
<span id="t28" class="t ax" style="left:669.1px;top:614.0px;color:#000;letter-spacing:-0.458px;">3.5ms</span>
<span id="t29" class="t ax" style="left:710.9px;top:614.0px;color:#000;letter-spacing:-0.458px;">4.5ms</span>
<span id="t30" class="t ax" style="left:752.8px;top:614.0px;color:#000;letter-spacing:-0.458px;">5.5ms</span>
<span id="t31" class="t ax" style="left:794.6px;top:614.0px;color:#000;letter-spacing:-0.458px;">6.5ms</span>
<span id="t32" class="t ax" style="left:836.5px;top:614.0px;color:#000;letter-spacing:-0.458px;">7.5ms</span>
<span id="t33" class="t ax" style="left:878.4px;top:614.0px;color:#000;letter-spacing:-0.458px;">8.5ms</span>
<span id="t34" class="t ax" style="left:920.2px;top:614.0px;color:#000;letter-spacing:-0.458px;">9.5ms</span>
<span id="t35" class="t ax" style="left:958.8px;top:614.0px;color:#000;letter-spacing:-0.393px;">10.5ms</span>
<span id="t36" class="t ax" style="left:1000.6px;top:614.0px;color:#000;letter-spacing:-0.245px;">11.5ms</span>
<span id="t37" class="t ax" style="left:1042.5px;top:614.0px;color:#000;letter-spacing:-0.393px;">12.5ms</span>
<span id="t38" class="t ax" style="left:1084.4px;top:614.0px;color:#000;letter-spacing:-0.393px;">13.5ms</span>
<span id="t39" class="t ax" style="left:1126.2px;top:614.0px;color:#000;letter-spacing:-0.393px;">14.5ms</span>
<span id="t40" class="t ax" style="left:1168.1px;top:614.0px;color:#000;letter-spacing:-0.393px;">15.5ms</span>
<span id="t41" class="t ax" style="left:883.0px;top:314.0px;color:#000;letter-spacing:-0.106px;">Measurement 1</span>
<span id="t42" class="t ax" style="left:883.0px;top:329.0px;color:#000;letter-spacing:-0.375px;">(8.1ms, 145.79mW)</span>
<span id="t43" class="t ax" style="left:815.0px;top:499.5px;color:#000;letter-spacing:-0.106px;">Measurement 2</span>
<span id="t44" class="t ax" style="left:815.0px;top:514.5px;color:#000;letter-spacing:-0.375px;">(6.1ms, 128.70mW)</span>
<div class="b" style="left:796px;top:652px;width:102px;height:27px;background:#fff;border:1px solid #000;box-sizing:border-box;"></div>
<svg class="b" style="left:797.6px;top:661px" width="26" height="10" viewBox="0 0 26 10"><path d="M0.5 5.5H25" stroke="#00bcbc" stroke-width="1"/><circle cx="11.5" cy="5.5" r="1.9" fill="#00bcbc"/></svg>
<span id="t45" class="t ax" style="left:824.8px;top:659.0px;color:#00aeb4;letter-spacing:-0.065px;">Target power</span>
<span id="t46" class="t ui" style="left:529.0px;top:689.0px;color:#000;letter-spacing:-0.259px;">t0 = 4s 917ms 38µs, t_last = t0 + 16.2ms</span>
<div class="b" style="left:790px;top:689px;width:1px;height:20px;background:#8a8a8a;"></div>
<span id="t47" class="t ui" style="left:875.5px;top:689.0px;color:#8c8c8c;letter-spacing:-0.201px;">Measured Δt or X value</span>
<div class="b" style="left:1060px;top:689px;width:1px;height:20px;background:#8a8a8a;"></div>
<span id="t48" class="t ui" style="left:1142.0px;top:689.0px;color:#8c8c8c;letter-spacing:-0.316px;">Y value</span>
<span id="t49" class="t ui" style="left:568.0px;top:724.0px;color:#000;letter-spacing:-0.147px;">min = 127.83mW, avg = 140.32mW, max = 147.84mW</span>
<div class="b" style="left:943px;top:724px;width:1px;height:20px;background:#8a8a8a;"></div>
<span id="t50" class="t ui" style="left:1001.4px;top:724.0px;color:#8c8c8c;letter-spacing:-0.089px;">Summary values for power and energy</span>
</body></html>
